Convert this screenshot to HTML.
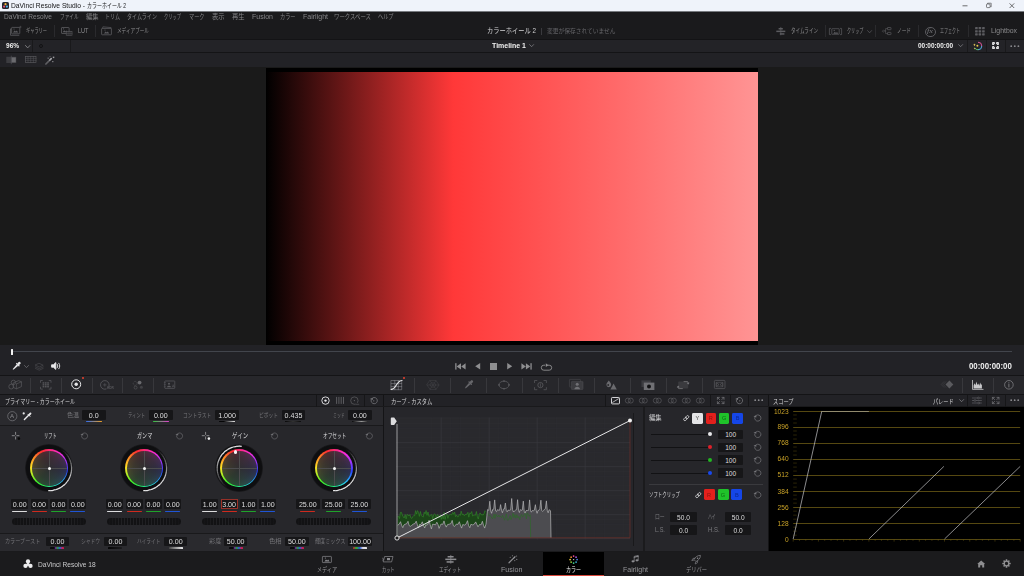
<!DOCTYPE html>
<html lang="ja"><head><meta charset="utf-8"><title>DaVinci Resolve Studio - カラーホイール 2</title>
<style>
html,body{margin:0;padding:0;}
body{width:1024px;height:576px;overflow:hidden;background:linear-gradient(#eff3fa 0,#eff3fa 11px,#1a1a1c 11px);font-family:"Liberation Sans","Noto Sans CJK JP",sans-serif;position:relative;}
#app{position:absolute;left:0;top:0;width:1024px;height:576px;overflow:hidden;filter:blur(.5px);}
#app div,#app svg,#app span{position:absolute;}
#app span{white-space:nowrap;line-height:20px;height:20px;transform-origin:0 50%;}
svg{overflow:visible}
</style></head>
<body><div id="app">
<div style="left:0px;top:0px;width:1024px;height:11px;background:#eff3fa;"></div>
<div style="left:0px;top:11px;width:1024px;height:1px;background:#777a7f;"></div>
<svg style="left:2.2px;top:2.2px;" width="7" height="7" viewBox="0 0 7 7"><rect x="0" y="0" width="7" height="7" rx="1.5" fill="#23272f"/><circle cx="3.5" cy="2.2" r="1.1" fill="#f5b43c"/><circle cx="2.1" cy="4.6" r="1.1" fill="#e9506e"/><circle cx="4.9" cy="4.6" r="1.1" fill="#4fb3e8"/></svg>
<span style="left:11.2px;top:-4.1px;font-size:6.6px;color:#121214;transform:scaleX(1.016);">DaVinci Resolve Studio -</span>
<span style="left:86.5px;top:-4.1px;font-size:6.6px;color:#121214;transform:scaleX(0.755);">カラーホイール 2</span>
<svg style="left:960.6px;top:2px;" width="60" height="8" viewBox="0 0 60 8"><path d="M1.5 3.8h5" stroke="#333" stroke-width=".7" fill="none"/><rect x="25.5" y="2" width="3.6" height="3.6" rx=".8" stroke="#333" stroke-width=".6" fill="none"/><path d="M26.6 2v-.8h3.6v3.6h-.9" stroke="#333" stroke-width=".55" fill="none"/><path d="M48.6 1.4l4.6 4.6M53.2 1.4l-4.6 4.6" stroke="#333" stroke-width=".7" fill="none"/></svg>
<div style="left:0px;top:12px;width:1024px;height:28px;background:#1a1a1c;"></div>
<span style="left:4px;top:6.8px;font-size:6.4px;color:#858588;transform:scaleX(1.026);">DaVinci Resolve</span>
<span style="left:59.5px;top:6.8px;font-size:6.4px;color:#858588;transform:scaleX(0.724);">ファイル</span>
<span style="left:85.5px;top:6.8px;font-size:6.4px;color:#858588;transform:scaleX(0.978);">編集</span>
<span style="left:105px;top:6.8px;font-size:6.4px;color:#858588;transform:scaleX(0.782);">トリム</span>
<span style="left:127px;top:6.8px;font-size:6.4px;color:#858588;transform:scaleX(0.791);">タイムライン</span>
<span style="left:164px;top:6.8px;font-size:6.4px;color:#858588;transform:scaleX(0.665);">クリップ</span>
<span style="left:188.5px;top:6.8px;font-size:6.4px;color:#858588;transform:scaleX(0.808);">マーク</span>
<span style="left:212px;top:6.8px;font-size:6.4px;color:#858588;transform:scaleX(0.978);">表示</span>
<span style="left:232px;top:6.8px;font-size:6.4px;color:#858588;transform:scaleX(0.978);">再生</span>
<span style="left:252px;top:6.8px;font-size:6.4px;color:#858588;transform:scaleX(1.094);">Fusion</span>
<span style="left:279.5px;top:6.8px;font-size:6.4px;color:#858588;transform:scaleX(0.808);">カラー</span>
<span style="left:302.5px;top:6.8px;font-size:6.4px;color:#858588;transform:scaleX(1.100);">Fairlight</span>
<span style="left:334px;top:6.8px;font-size:6.4px;color:#858588;transform:scaleX(0.845);">ワークスペース</span>
<span style="left:378px;top:6.8px;font-size:6.4px;color:#858588;transform:scaleX(0.808);">ヘルプ</span>
<span style="left:26px;top:21.4px;font-size:6.4px;color:#8c8c8e;transform:scaleX(0.657);">ギャラリー</span>
<span style="left:77.5px;top:21.4px;font-size:6.6px;color:#8c8c8e;transform:scaleX(0.842);">LUT</span>
<span style="left:117px;top:21.4px;font-size:6.4px;color:#8c8c8e;transform:scaleX(0.722);">メディアプール</span>
<div style="left:54px;top:25px;width:1px;height:12px;background:#2a2a2d;"></div>
<div style="left:94.5px;top:25px;width:1px;height:12px;background:#2a2a2d;"></div>
<span style="left:487px;top:21.2px;font-size:7.4px;color:#d2d2d4;transform:scaleX(0.846);">カラーホイール 2</span>
<div style="left:540.9px;top:28px;width:0.8px;height:7px;background:#3a3a3e;"></div>
<span style="left:546.5px;top:21.4px;font-size:6px;color:#646468;transform:scaleX(0.956);">変更が保存されていません</span>
<span style="left:791px;top:21.4px;font-size:6.4px;color:#8c8c8e;transform:scaleX(0.712);">タイムライン</span>
<span style="left:846.5px;top:21.4px;font-size:6.4px;color:#8c8c8e;transform:scaleX(0.645);">クリップ</span>
<span style="left:897px;top:21.4px;font-size:6.4px;color:#8c8c8e;transform:scaleX(0.730);">ノード</span>
<span style="left:940px;top:21.4px;font-size:6.4px;color:#8c8c8e;transform:scaleX(0.626);">エフェクト</span>
<span style="left:990.5px;top:21.4px;font-size:6.4px;color:#8c8c8e;transform:scaleX(1.076);">Lightbox</span>
<div style="left:824.5px;top:25px;width:1px;height:12px;background:#2a2a2d;"></div>
<div style="left:875px;top:25px;width:1px;height:12px;background:#2a2a2d;"></div>
<div style="left:917.5px;top:25px;width:1px;height:12px;background:#2a2a2d;"></div>
<div style="left:967.8px;top:25px;width:1px;height:12px;background:#2a2a2d;"></div>
<div style="left:0px;top:40px;width:1024px;height:12.2px;background:#232327;"></div>
<div style="left:0px;top:39.1px;width:1024px;height:1px;background:#131315;"></div>
<div style="left:0px;top:51.9px;width:1024px;height:1px;background:#141416;"></div>
<span style="left:6.2px;top:36.2px;font-size:7.4px;color:#f0f0f0;font-weight:700;transform:scaleX(0.885);">96%</span>
<div style="left:32px;top:40px;width:1.2px;height:12px;background:#19191b;"></div>
<div style="left:69.6px;top:40px;width:1.2px;height:12px;background:#19191b;"></div>
<div style="left:967.1px;top:40px;width:1.2px;height:12px;background:#19191b;"></div>
<div style="left:986px;top:40px;width:1.2px;height:12px;background:#19191b;"></div>
<div style="left:1005px;top:40px;width:1.2px;height:12px;background:#19191b;"></div>
<span style="left:491.5px;top:36.1px;font-size:7.2px;color:#f0f0f0;font-weight:700;transform:scaleX(0.971);">Timeline 1</span>
<span style="left:918.2px;top:36.1px;font-size:7.2px;color:#f0f0f0;font-weight:700;transform:scaleX(0.896);">00:00:00:00</span>
<div style="left:0px;top:52.6px;width:1024px;height:15px;background:#222226;"></div>
<div style="left:0px;top:67px;width:1024px;height:277.8px;background:#1a1a1a;"></div>
<div style="left:265.5px;top:67.5px;width:492.8px;height:277.2px;background:#000;"></div>
<div style="left:265.5px;top:72px;width:492.8px;height:268.6px;background:linear-gradient(90deg,#000 0%,#ff3838 38%,#ff9494 100%);"></div>
<div style="left:0px;top:344.8px;width:1024px;height:30.4px;background:#222226;"></div>
<div style="left:12px;top:351.3px;width:1000px;height:1px;background:#42454c;"></div>
<div style="left:11.4px;top:349.4px;width:1.3px;height:5.2px;background:#f2f2f2;border-radius:.5px"></div>
<span style="left:969px;top:357.4px;font-size:8.2px;color:#f0f0f0;font-weight:700;transform:scaleX(0.959);">00:00:00:00</span>
<div style="left:0px;top:375.2px;width:1024px;height:19.2px;background:#27272b;"></div>
<div style="left:0px;top:374.7px;width:1024px;height:1px;background:#141416;"></div>
<div style="left:0px;top:393.9px;width:1024px;height:1px;background:#141416;"></div>
<div style="left:0px;top:394.9px;width:1024px;height:12px;background:#222226;"></div>
<div style="left:0px;top:406.9px;width:383px;height:18.3px;background:#2a2a2e;"></div>
<div style="left:0px;top:425.7px;width:383px;height:107px;background:#27272b;"></div>
<div style="left:0px;top:533.4px;width:383px;height:17.4px;background:#2a2a2e;"></div>
<div style="left:384px;top:406.9px;width:384px;height:143.9px;background:#26262a;"></div>
<div style="left:768.4px;top:406.9px;width:255.6px;height:143.9px;background:#000;"></div>
<div style="left:382.9px;top:394.9px;width:1.2px;height:156.1px;background:#141416;"></div>
<div style="left:767.5px;top:394.9px;width:1px;height:156.1px;background:#141416;"></div>
<div style="left:0px;top:406.4px;width:1024px;height:0.8px;background:#19191b;"></div>
<div style="left:0px;top:424.9px;width:383px;height:1px;background:#19191b;"></div>
<div style="left:0px;top:532.6px;width:383px;height:1px;background:#19191b;"></div>
<div style="left:0px;top:551.6px;width:1024px;height:24.4px;background:#1b1b1d;"></div>
<svg style="left:10px;top:26px;" width="12" height="10" viewBox="0 0 12 10"><rect x="1.6" y="1.4" width="8.2" height="6.4" rx="0.6" stroke="#5c5c60" stroke-width="0.8" fill="none"/><path d="M.5 3v6.3h8.4" stroke="#5c5c60" stroke-width="0.8" fill="none" stroke-linecap="round" stroke-linejoin="round" /><path d="M3 6.4l1.6-2 1.2 1.2 1-1 1.4 1.8z" fill="#5c5c60"/><circle cx="4" cy="3.0" r=".6" fill="#5c5c60"/><path d="M10.4 .2v1.6M9.6 1h1.6" stroke="#5c5c60" stroke-width="0.5" fill="none" stroke-linecap="round" stroke-linejoin="round" /></svg>
<svg style="left:60.8px;top:26.6px;" width="12" height="9" viewBox="0 0 12 9"><rect x="0.5" y="0.5" width="7.6" height="6" rx="0.5" stroke="#5c5c60" stroke-width="0.8" fill="none"/><path d="M1.6 5.2l1.6-2 1.2 1.2 1-1 1.4 1.8z" fill="#5c5c60"/><circle cx="2.6" cy="1.8" r=".6" fill="#5c5c60"/><rect x="5.2" y="4.4" width="5.8" height="3.8" rx="0" stroke="#5c5c60" stroke-width="0.6" fill="#19191b"/><path d="M5.2 6.3h5.8M7.1 4.4v3.8M9 4.4v3.8" stroke="#5c5c60" stroke-width="0.5" fill="none" stroke-linecap="round" stroke-linejoin="round" /></svg>
<svg style="left:101.4px;top:26.4px;" width="12" height="10" viewBox="0 0 12 10"><path d="M1.6 2.2l.3-1.4 8.2 .8-.1.8" stroke="#5c5c60" stroke-width="0.7" fill="none" stroke-linecap="round" stroke-linejoin="round" /><rect x="0.6" y="2.4" width="9.8" height="6.4" rx="0.6" stroke="#5c5c60" stroke-width="0.8" fill="none"/><path d="M3 7.4l1.6-2 1.2 1.2 1-1 1.4 1.8z" fill="#5c5c60"/><circle cx="4" cy="4.0" r=".6" fill="#5c5c60"/></svg>
<svg style="left:776px;top:27px;" width="10" height="9" viewBox="0 0 10 9"><path d="M4.8 .3v7.6" stroke="#5c5c60" stroke-width="0.7" fill="none" stroke-linecap="round" stroke-linejoin="round" /><rect x="2.6" y="1" width="4.2" height="1.5" fill="#5c5c60"/><rect x=".3" y="3.6" width="9" height="1.5" fill="#5c5c60"/><rect x="3.8" y="6.2" width="4.6" height="1.5" fill="#5c5c60"/></svg>
<svg style="left:829px;top:27.6px;" width="13" height="7" viewBox="0 0 13 7"><path d="M1.6 .4h-1.2v6.2h1.2M11.4 .4h1.2v6.2h-1.2" stroke="#5c5c60" stroke-width="0.7" fill="none" stroke-linecap="round" stroke-linejoin="round" /><rect x="2.8" y="0.7" width="7.4" height="5.6" rx="0.3" stroke="#5c5c60" stroke-width="0.7" fill="none"/><path d="M4.2 5.800000000000001l1.6-2 1.2 1.2 1-1 1.4 1.8z" fill="#5c5c60"/><circle cx="5.2" cy="2.4" r=".6" fill="#5c5c60"/></svg>
<svg style="left:866.8px;top:29.6px;" width="6" height="4" viewBox="0 0 6 4"><path d="M.6 .6l2 2.2 2-2.2" stroke="#5c5c60" stroke-width="0.7" fill="none" stroke-linecap="round" stroke-linejoin="round" /></svg>
<svg style="left:882px;top:27px;" width="10" height="9" viewBox="0 0 10 9"><rect x="5.4" y="0.5" width="3.6" height="2.2" rx="0.4" stroke="#5c5c60" stroke-width="0.7" fill="none"/><rect x="5.4" y="5.4" width="3.6" height="2.2" rx="0.4" stroke="#5c5c60" stroke-width="0.7" fill="none"/><path d="M5.4 1.6h-1.8v5h1.8M3.6 4h-1.2" stroke="#5c5c60" stroke-width="0.6" fill="none" stroke-linecap="round" stroke-linejoin="round" /><path d="M.4 4l1-1 1 1-1 1z" stroke="#5c5c60" stroke-width="0.5" fill="none" stroke-linecap="round" stroke-linejoin="round" /></svg>
<div style="left:925.2px;top:26.5px;width:8.6px;height:8.6px;border:.8px solid #5c5c60;border-radius:50%"></div>
<span style="left:927px;top:21.2px;font-size:5.4px;color:#77777b;transform:scaleX(1.542);font-style:italic;font-family:'Liberation Serif',serif;">fx</span>
<svg style="left:974.6px;top:26.8px;" width="10" height="9" viewBox="0 0 10 9"><rect x="0.1" y="0.1" width="2.6" height="2.2" rx=".4" fill="#5c5c60"/><rect x="3.6" y="0.1" width="2.6" height="2.2" rx=".4" fill="#5c5c60"/><rect x="7.1" y="0.1" width="2.6" height="2.2" rx=".4" fill="#5c5c60"/><rect x="0.1" y="3.2" width="2.6" height="2.2" rx=".4" fill="#5c5c60"/><rect x="3.6" y="3.2" width="2.6" height="2.2" rx=".4" fill="#5c5c60"/><rect x="7.1" y="3.2" width="2.6" height="2.2" rx=".4" fill="#5c5c60"/><rect x="0.1" y="6.3" width="2.6" height="2.2" rx=".4" fill="#5c5c60"/><rect x="3.6" y="6.3" width="2.6" height="2.2" rx=".4" fill="#5c5c60"/><rect x="7.1" y="6.3" width="2.6" height="2.2" rx=".4" fill="#5c5c60"/></svg>
<svg style="left:24.8px;top:44.8px;" width="6" height="4" viewBox="0 0 6 4"><path d="M.5 .5l2.2 2.4 2.2-2.4" stroke="#8a8a8e" stroke-width="0.85" fill="none" stroke-linecap="round" stroke-linejoin="round" /></svg>
<div style="left:38.8px;top:44.3px;width:2.2px;height:2.2px;border:.6px solid #121214;border-radius:50%"></div>
<svg style="left:528.8px;top:44.2px;" width="6" height="4" viewBox="0 0 6 4"><path d="M.6 .6l2 2.1 2-2.1" stroke="#8a8a8e" stroke-width="0.7" fill="none" stroke-linecap="round" stroke-linejoin="round" /></svg>
<svg style="left:958.2px;top:44.2px;" width="6" height="4" viewBox="0 0 6 4"><path d="M.6 .6l2 2.1 2-2.1" stroke="#8a8a8e" stroke-width="0.7" fill="none" stroke-linecap="round" stroke-linejoin="round" /></svg>
<svg style="left:973px;top:41px;" width="10" height="10" viewBox="0 0 10 10"><path d="M5 1.2a3.8 3.8 0 0 1 3.8 3.8" stroke="#e0559a" stroke-width="1" fill="none"/><path d="M8.8 5a3.8 3.8 0 0 1-3.8 3.8" stroke="#57b2e6" stroke-width="1" fill="none"/><path d="M5 8.8a3.8 3.8 0 0 1-3.2-1.8" stroke="#5cc76a" stroke-width="1" fill="none"/><circle cx="4.4" cy="4.8" r="1" fill="#e8c64a"/><path d="M1.4 2.4l.5 1 .9.4-.9.4-.5 1-.4-1-.9-.4.9-.4z" fill="#f0d060"/><path d="M1.6 6.6l.3.6.6.3-.6.3-.3.6-.3-.6-.6-.3.6-.3z" fill="#f0d060"/></svg>
<svg style="left:992.2px;top:42.2px;" width="8" height="8" viewBox="0 0 8 8"><rect x="0.1" y="0.1" width="2.8" height="2.8" rx=".4" fill="#e4e4e6"/><rect x="0.1" y="4.1" width="2.8" height="2.8" rx=".4" fill="#e4e4e6"/><rect x="4.1" y="0.1" width="2.8" height="2.8" rx=".4" fill="#e4e4e6"/><rect x="4.1" y="4.1" width="2.8" height="2.8" rx=".4" fill="#e4e4e6"/><path d="M2.1 2.1l2.8 2.8M4.9 2.1l-2.8 2.8" stroke="#232327" stroke-width="0.8" fill="none" stroke-linecap="round" stroke-linejoin="round" /></svg>
<svg style="left:1009.6px;top:44.8px;" width="10" height="3" viewBox="0 0 10 3"><circle cx="1.2" cy="1.2" r=".9" fill="#8a8a8e"/><circle cx="4.8" cy="1.2" r=".9" fill="#8a8a8e"/><circle cx="8.4" cy="1.2" r=".9" fill="#8a8a8e"/></svg>
<svg style="left:6.2px;top:56px;" width="11" height="8" viewBox="0 0 11 8"><rect x=".3" y=".8" width="10" height="6.2" fill="#3c3c40"/><rect x="5.6" y="1.4" width="4.2" height="5" fill="#6a6a6e"/><path d="M5.3 0v7.8" stroke="#58585c" stroke-width="0.6" fill="none" stroke-linecap="round" stroke-linejoin="round" /></svg>
<svg style="left:25px;top:56.4px;" width="12" height="7" viewBox="0 0 12 7"><rect x="0.4" y="0.4" width="10.6" height="6" rx="0" stroke="#57575b" stroke-width="0.7" fill="none"/><path d="M.4 2.4h10.6M.4 4.4h10.6M3 .4v6M5.7 .4v6M8.4 .4v6" stroke="#57575b" stroke-width="0.5" fill="none" stroke-linecap="round" stroke-linejoin="round" /></svg>
<svg style="left:44.5px;top:55.6px;" width="10" height="9" viewBox="0 0 10 9"><path d="M.9 8l3.6-3.6" stroke="#5e5e62" stroke-width="1.7" fill="none" stroke-linecap="round" stroke-linejoin="round" /><path d="M4.9 4l1.3-1.3" stroke="#a4a4a8" stroke-width="1.7" fill="none" stroke-linecap="round" stroke-linejoin="round" /><rect x="7.8" y=".6" width="1.5" height="1.5" fill="#9a9a9e"/><rect x="7.2" y="5" width="1.2" height="1.2" fill="#8a8a8e"/><rect x="2.6" y="1.6" width="1.1" height="1.1" fill="#8a8a8e"/><rect x="4.6" y=".2" width=".9" height=".9" fill="#77777b"/></svg>
<svg style="left:11.6px;top:362.2px;" width="9" height="8.4" viewBox="0 0 9 8.4"><g transform="translate(4.4 4.1) rotate(45) scale(1.05)" fill="#e8e8ea"><rect x="-1.15" y="-5.2" width="2.3" height="3.2" rx=".9"/><rect x="-2.1" y="-2.5" width="4.2" height="1.1" rx=".3"/><path d="M-.95 -1.5h1.9l-.35 4.9-.6 1.7-.6-1.7z"/></g></svg>
<svg style="left:23.8px;top:365.2px;" width="6" height="4" viewBox="0 0 6 4"><path d="M.5 .5l2 2.1 2-2.1" stroke="#77777b" stroke-width="0.7" fill="none" stroke-linecap="round" stroke-linejoin="round" /></svg>
<svg style="left:34.8px;top:362.6px;" width="9" height="7.4" viewBox="0 0 9 7.4"><path d="M4.3 .4l3.9 1.8-3.9 1.8-3.9-1.8z" stroke="#47474b" stroke-width="0.7" fill="none" stroke-linecap="round" stroke-linejoin="round" /><path d="M.4 3.9l3.9 1.8 3.9-1.8M.4 5.4l3.9 1.8 3.9-1.8" stroke="#47474b" stroke-width="0.7" fill="none" stroke-linecap="round" stroke-linejoin="round" /></svg>
<svg style="left:51.2px;top:362.4px;" width="10" height="8" viewBox="0 0 10 8"><path d="M.6 2.8h1.8l2.4-2.2v6.8l-2.4-2.2h-1.8z" fill="#e8e8ea" stroke="#e8e8ea" stroke-width=".9" stroke-linejoin="round"/><path d="M6.2 2.2c.8 1 .8 2.6 0 3.6M7.8 1.2c1.3 1.6 1.3 4 0 5.6" stroke="#e8e8ea" stroke-width="0.9" fill="none" stroke-linecap="round" stroke-linejoin="round" /></svg>
<svg style="left:455px;top:362.9px;" width="11" height="6.8" viewBox="0 0 11 6.8"><rect x=".2" y=".2" width="1.3" height="6.4" fill="#8e8e90"/><path d="M6 .2v6.4l-4.4-3.2zM10.6 .2v6.4l-4.4-3.2z" fill="#8e8e90"/></svg>
<svg style="left:474.6px;top:363.1px;" width="6" height="6.4" viewBox="0 0 6 6.4"><path d="M5.2 0v6.4l-5-3.2z" fill="#8e8e90"/></svg>
<div style="left:489.8px;top:362.9px;width:6.8px;height:6.8px;background:#8e8e90;"></div>
<svg style="left:506.8px;top:363.1px;" width="6" height="6.4" viewBox="0 0 6 6.4"><path d="M.2 0v6.4l5-3.2z" fill="#8e8e90"/></svg>
<svg style="left:521.2px;top:362.9px;" width="11" height="6.8" viewBox="0 0 11 6.8"><rect x="9.4" y=".2" width="1.3" height="6.4" fill="#8e8e90"/><path d="M.4 .2v6.4l4.4-3.2zM4.9 .2v6.4l4.4-3.2z" fill="#8e8e90"/></svg>
<svg style="left:540.8px;top:362.7px;" width="12" height="8" viewBox="0 0 12 8"><path d="M3.8 2.2h-1a2.5 2.5 0 0 0 0 5h5.4a2.5 2.5 0 0 0 0-5h-1.4" stroke="#8e8e90" stroke-width="0.9" fill="none" stroke-linecap="round" stroke-linejoin="round" /><path d="M4.8 .3l2.6 1.9-2.6 1.9z" fill="#8e8e90"/></svg>
<div style="left:30.2px;top:377.6px;width:0.8px;height:15px;background:#38383c;"></div>
<div style="left:60.8px;top:377.6px;width:0.8px;height:15px;background:#38383c;"></div>
<div style="left:91.6px;top:377.6px;width:0.8px;height:15px;background:#38383c;"></div>
<div style="left:122.2px;top:377.6px;width:0.8px;height:15px;background:#38383c;"></div>
<div style="left:152.9px;top:377.6px;width:0.8px;height:15px;background:#38383c;"></div>
<div style="left:414.1px;top:377.6px;width:0.8px;height:15px;background:#38383c;"></div>
<div style="left:450.1px;top:377.6px;width:0.8px;height:15px;background:#38383c;"></div>
<div style="left:486.1px;top:377.6px;width:0.8px;height:15px;background:#38383c;"></div>
<div style="left:522.1px;top:377.6px;width:0.8px;height:15px;background:#38383c;"></div>
<div style="left:558.1px;top:377.6px;width:0.8px;height:15px;background:#38383c;"></div>
<div style="left:594.1px;top:377.6px;width:0.8px;height:15px;background:#38383c;"></div>
<div style="left:630.1px;top:377.6px;width:0.8px;height:15px;background:#38383c;"></div>
<div style="left:666.1px;top:377.6px;width:0.8px;height:15px;background:#38383c;"></div>
<div style="left:702.1px;top:377.6px;width:0.8px;height:15px;background:#38383c;"></div>
<div style="left:962.1px;top:377.6px;width:0.8px;height:15px;background:#38383c;"></div>
<div style="left:993.3px;top:377.6px;width:0.8px;height:15px;background:#38383c;"></div>
<svg style="left:8.2px;top:379.4px;" width="14" height="11" viewBox="0 0 14 11"><circle cx="3.2" cy="7.6" r="2.4" stroke="#5a5a5e" stroke-width="0.7" fill="none"/><circle cx="5.4" cy="3.4" r="2.2" stroke="#5a5a5e" stroke-width="0.7" fill="none"/><path d="M5.6 3.8l5-2.2 2.8 1.2v4.8l-5 2.2-2.8-1.2z" stroke="#5a5a5e" stroke-width="0.7" fill="none" stroke-linecap="round" stroke-linejoin="round" /><path d="M8.4 5v4.8M8.4 5l5-2.2" stroke="#5a5a5e" stroke-width="0.6" fill="none" stroke-linecap="round" stroke-linejoin="round" /></svg>
<svg style="left:40px;top:379.8px;" width="12" height="10" viewBox="0 0 12 10"><path d="M.5 2.4v-1.9h1.9M9.1 .5h1.9v1.9M11 7.2v1.9h-1.9M2.4 9.1h-1.9v-1.9" stroke="#5a5a5e" stroke-width="0.7" fill="none" stroke-linecap="round" stroke-linejoin="round" /><rect x="2.6" y="2.3" width="1.7" height="1.3" fill="#5a5a5e"/><rect x="4.9" y="2.3" width="1.7" height="1.3" fill="#5a5a5e"/><rect x="7.199999999999999" y="2.3" width="1.7" height="1.3" fill="#5a5a5e"/><rect x="2.6" y="4.199999999999999" width="1.7" height="1.3" fill="#5a5a5e"/><rect x="4.9" y="4.199999999999999" width="1.7" height="1.3" fill="#5a5a5e"/><rect x="7.199999999999999" y="4.199999999999999" width="1.7" height="1.3" fill="#5a5a5e"/><rect x="2.6" y="6.1" width="1.7" height="1.3" fill="#5a5a5e"/><rect x="4.9" y="6.1" width="1.7" height="1.3" fill="#5a5a5e"/><rect x="7.199999999999999" y="6.1" width="1.7" height="1.3" fill="#5a5a5e"/></svg>
<svg style="left:70.8px;top:379.2px;" width="12" height="11" viewBox="0 0 12 11"><circle cx="5.2" cy="5.3" r="4.5" stroke="#e8e8ea" stroke-width="1" fill="none"/><circle cx="5.2" cy="5.3" r="1.7" fill="#e8e8ea"/></svg>
<div style="left:82.1px;top:377.2px;width:1.9px;height:1.9px;border-radius:50%;background:#e8412f"></div>
<svg style="left:100px;top:379.6px;" width="15" height="11" viewBox="0 0 15 11"><circle cx="4.8" cy="4.9" r="4.3" stroke="#5a5a5e" stroke-width="0.8" fill="none"/><path d="M4.8 3.6v2.6M3.5 4.9h2.6" stroke="#5a5a5e" stroke-width="0.6" fill="none" stroke-linecap="round" stroke-linejoin="round" /><rect x="6.6" y="6.6" width="7.4" height="3.6" fill="#27272b"/></svg>
<span style="left:106.8px;top:378px;font-size:3.6px;color:#5a5a5e;font-weight:700;transform:scaleX(0.872);">HDR</span>
<svg style="left:132.4px;top:379.6px;" width="12" height="10" viewBox="0 0 12 10"><circle cx="3.2" cy="3.4" r="2" stroke="#5a5a5e" stroke-width=".6" fill="none" stroke-dasharray="1 .7"/><circle cx="3.6" cy="7.6" r="1.5" stroke="#5a5a5e" stroke-width="0.6" fill="none"/><circle cx="7.6" cy="2.6" r="1.9" fill="#6a6a6e"/><circle cx="9.4" cy="7.2" r="1.5" fill="#414145"/></svg>
<svg style="left:163.6px;top:380px;" width="12" height="9.4" viewBox="0 0 12 9.4"><rect x="0.8" y="1" width="10" height="7.4" rx="0.5" stroke="#5a5a5e" stroke-width="0.7" fill="none"/><path d="M.2 2.4h1.2M.2 4.6h1.2M.2 6.8h1.2" stroke="#5a5a5e" stroke-width="0.5" fill="none" stroke-linecap="round" stroke-linejoin="round" /><circle cx="5" cy="3.8" r="1" fill="#5a5a5e"/><path d="M3 7.2c0-2 4-2 4 0z" fill="#5a5a5e"/><path d="M8.2 7.2l1-2.6 1 2.6M8.5 6.4h1.4" stroke="#5a5a5e" stroke-width="0.45" fill="none" stroke-linecap="round" stroke-linejoin="round" /></svg>
<svg style="left:391px;top:379.6px;" width="12" height="10.4" viewBox="0 0 12 10.4"><path d="M.3 .5h10.4v9.2h-10.4zM.3 3.6h10.4M.3 6.6h10.4M3.8 .5v9.2M7.3 .5v9.2" stroke="#8e8e92" stroke-width="0.55" fill="none" stroke-linecap="round" stroke-linejoin="round" /><path d="M.2 9.4c5 0 5-8.6 10.8-8.9" stroke="#e8e8ea" stroke-width="1.2" fill="none" stroke-linecap="round" stroke-linejoin="round" /></svg>
<div style="left:402.8px;top:377px;width:1.9px;height:1.9px;border-radius:50%;background:#e8412f"></div>
<svg style="left:426.6px;top:379.8px;" width="12" height="10" viewBox="0 0 12 10"><path d="M3 .6h6l3 4.4-3 4.4h-6l-3-4.4zM0 5h12M3 .6l6 8.8M9 .6l-6 8.8M4.6 2.8h2.8l1.4 2.2-1.4 2.2h-2.8l-1.4-2.2z" stroke="#47474b" stroke-width="0.45" fill="none" stroke-linecap="round" stroke-linejoin="round" /></svg>
<svg style="left:463.8px;top:380px;" width="10" height="9.4" viewBox="0 0 10 9.4"><g transform="translate(4.7 4.6) rotate(45) scale(1.08)" fill="#66666a"><rect x="-1.15" y="-5.2" width="2.3" height="3.2" rx=".9"/><rect x="-2.1" y="-2.5" width="4.2" height="1.1" rx=".3"/><path d="M-.95 -1.5h1.9l-.35 4.9-.6 1.7-.6-1.7z"/></g></svg>
<svg style="left:498.2px;top:380px;" width="12" height="10" viewBox="0 0 12 10"><ellipse cx="6" cy="4.9" rx="5" ry="3.8" stroke="#5a5a5e" stroke-width=".8" fill="none"/><rect x="5.25" y="0.35" width="1.5" height="1.5" fill="#5a5a5e"/><rect x="5.25" y="7.95" width="1.5" height="1.5" fill="#5a5a5e"/><rect x="0.25" y="4.15" width="1.5" height="1.5" fill="#5a5a5e"/><rect x="10.25" y="4.15" width="1.5" height="1.5" fill="#5a5a5e"/></svg>
<svg style="left:534.4px;top:379.6px;" width="13" height="10.4" viewBox="0 0 13 10.4"><path d="M.5 2.6v-2.1h2.4M10 .5h2.4v2.1M12.4 7.6v2.1h-2.4M2.9 9.7h-2.4v-2.1" stroke="#5a5a5e" stroke-width="0.7" fill="none" stroke-linecap="round" stroke-linejoin="round" /><circle cx="6.4" cy="5.1" r="2.6" stroke="#5a5a5e" stroke-width="0.8" fill="none"/><path d="M6.4 3.8v2.6" stroke="#5a5a5e" stroke-width="0.7" fill="none" stroke-linecap="round" stroke-linejoin="round" /></svg>
<svg style="left:569px;top:379.4px;" width="15" height="11" viewBox="0 0 15 11"><rect x="0.4" y="0.4" width="11" height="7.6" rx="0.4" stroke="#48484c" stroke-width="0.6" fill="none"/><rect x="2.4" y="2.4" width="11.6" height="8" rx=".5" fill="#3c3c40" stroke="#505054" stroke-width=".5"/><circle cx="8.2" cy="5.2" r="1.5" fill="#707074"/><path d="M5.4 10.2c0-3.4 5.6-3.4 5.6 0z" fill="#707074"/></svg>
<svg style="left:606.4px;top:380px;" width="11" height="10" viewBox="0 0 11 10"><path d="M2.8 .6c1.4 1.8 2.4 2.8 2.4 4.2a2.4 2.4 0 0 1-4.8 0c0-1.4 1-2.4 2.4-4.2z" fill="#6a6a6e"/><circle cx="2.2" cy="5" r=".9" fill="#27272b"/><path d="M7.6 3.6l3.2 6h-6.4z" fill="#6a6a6e"/></svg>
<svg style="left:640.6px;top:379.6px;" width="14" height="10.4" viewBox="0 0 14 10.4"><rect x=".4" y=".4" width="9.4" height="6.6" fill="#3c3c40"/><rect x="2.8" y="2.6" width="10.6" height="7.4" fill="#707074"/><circle cx="8" cy="6.4" r="2" fill="#121214"/></svg>
<svg style="left:677.4px;top:379.8px;" width="13" height="10" viewBox="0 0 13 10"><rect x="1.2" y="1.6" width="10" height="7" rx=".8" fill="#3a3a3e"/><path d="M7 1.6h3.2a1 1 0 0 1 1 1v1.2" stroke="#77777b" stroke-width="0.8" fill="none" stroke-linecap="round" stroke-linejoin="round" /><path d="M9.8 2.8l1.4 1.8 1.4-1.8z" fill="#77777b"/><path d="M5.4 8.6h-3.2a1 1 0 0 1-1-1v-1.2" stroke="#77777b" stroke-width="0.8" fill="none" stroke-linecap="round" stroke-linejoin="round" /><path d="M-.2 7.4l1.4-1.8 1.4 1.8z" fill="#77777b"/></svg>
<svg style="left:713.8px;top:380.2px;" width="12" height="9.4" viewBox="0 0 12 9.4"><rect x="0.4" y="0.4" width="10.6" height="8.2" rx="1" stroke="#5a5a5e" stroke-width="0.7" fill="none"/><path d="M2.6 2.8l2.4 1.8-2.4 1.8zM8.4 2.8l-2.4 1.8 2.4 1.8z" stroke="#5a5a5e" stroke-width="0.6" fill="none" stroke-linecap="round" stroke-linejoin="round" /><rect x="2.2" y="2.4" width="6.6" height="4.4" rx="0.3" stroke="#5a5a5e" stroke-width="0.5" fill="none"/></svg>
<svg style="left:941px;top:380.2px;" width="13" height="9" viewBox="0 0 13 9"><path d="M3.2 1.4l-3 3.1 3 3.1M5.2 1.4l-3 3.1 3 3.1" stroke="#3e3e42" stroke-width=".7" fill="none"/><path d="M8.4 .6l3.9 3.9-3.9 3.9-3.9-3.9z" fill="#5a5a5e"/></svg>
<svg style="left:972.4px;top:379.6px;" width="12" height="10" viewBox="0 0 12 10"><path d="M.5 .4v9h10.6" stroke="#c8c8ca" stroke-width="0.8" fill="none" stroke-linecap="round" stroke-linejoin="round" /><path d="M1.6 8.6v-3l1-2.4.9 2 .9-3.6 1 3.4.9-1.6 1 2.4.9-3.2.9 2.4.8-1v4.6z" fill="#c8c8ca"/></svg>
<svg style="left:1003.6px;top:379.8px;" width="10" height="10" viewBox="0 0 10 10"><circle cx="4.9" cy="4.8" r="4.3" stroke="#8a8a8e" stroke-width="0.7" fill="none"/><path d="M4.9 4.2v2.8" stroke="#8a8a8e" stroke-width="0.8" fill="none" stroke-linecap="round" stroke-linejoin="round" /><circle cx="4.9" cy="2.7" r=".5" fill="#8a8a8e"/></svg>
<span style="left:4.6px;top:391.8px;font-size:6.4px;color:#d4d4d6;transform:scaleX(0.789);">プライマリー - カラーホイール</span>
<span style="left:391px;top:391.8px;font-size:6.4px;color:#d4d4d6;transform:scaleX(0.827);">カーブ - カスタム</span>
<span style="left:772.6px;top:391.8px;font-size:6.4px;color:#d4d4d6;transform:scaleX(0.818);">スコープ</span>
<span style="left:933px;top:391.8px;font-size:6.4px;color:#d4d4d6;transform:scaleX(0.806);">パレード</span>
<div style="left:316.1px;top:395.2px;width:1px;height:11.4px;background:#161618;"></div>
<div style="left:363.5px;top:395.2px;width:1px;height:11.4px;background:#161618;"></div>
<div style="left:605.3px;top:395.2px;width:1px;height:11.4px;background:#161618;"></div>
<div style="left:710.1px;top:395.2px;width:1px;height:11.4px;background:#161618;"></div>
<div style="left:729.5px;top:395.2px;width:1px;height:11.4px;background:#161618;"></div>
<div style="left:747.5px;top:395.2px;width:1px;height:11.4px;background:#161618;"></div>
<div style="left:967px;top:395.2px;width:1px;height:11.4px;background:#161618;"></div>
<div style="left:986px;top:395.2px;width:1px;height:11.4px;background:#161618;"></div>
<div style="left:1005px;top:395.2px;width:1px;height:11.4px;background:#161618;"></div>
<svg style="left:321.4px;top:396px;" width="9" height="9" viewBox="0 0 9 9"><circle cx="4.5" cy="4.6" r="3.7" stroke="#e8e8ea" stroke-width="0.9" fill="none"/><circle cx="4.5" cy="4.6" r="1.2" fill="#e8e8ea"/></svg>
<svg style="left:336.4px;top:397.2px;" width="8" height="7" viewBox="0 0 8 7"><path d="M.6 .3v6.2M2.9 .3v6.2M5.2 .3v6.2M7.5 .3v6.2" stroke="#6a6a6e" stroke-width="0.8" fill="none" stroke-linecap="round" stroke-linejoin="round" /></svg>
<svg style="left:349.8px;top:396px;" width="10" height="9" viewBox="0 0 10 9"><circle cx="4.4" cy="4.6" r="3.7" stroke="#5e5e62" stroke-width="0.7" fill="none"/><circle cx="4.4" cy="4.6" r=".7" fill="#5e5e62"/><rect x="5.4" y="6.8" width="4" height="2" fill="#222226"/><path d="M5.8 8.3h3" stroke="#5e5e62" stroke-width="0.6" fill="none" stroke-linecap="round" stroke-linejoin="round" /></svg>
<svg style="left:0px;top:0px;" width="1" height="1" viewBox="0 0 1 1"><path d="M372.65 397.92A3.1 3.1 0 1 1 371.22 399.75" stroke="#808084" stroke-width="0.7" fill="none"/><path d="M372.80 397.72L369.88 399.03L372.70 400.05z" fill="#808084"/></svg>
<svg style="left:373.4px;top:399.8px;" width="2" height="2" viewBox="0 0 2 2"><circle cx=".8" cy=".8" r=".6" fill="#808084"/></svg>
<svg style="left:610.6px;top:396.8px;" width="9.4" height="7.6" viewBox="0 0 9.4 7.6"><rect x="0.5" y="0.5" width="8" height="6.4" rx="0.8" stroke="#e8e8ea" stroke-width="0.9" fill="none"/><path d="M1.6 5.4l5.8-3.6" stroke="#e8e8ea" stroke-width="0.7" fill="none" stroke-linecap="round" stroke-linejoin="round" /></svg>
<svg style="left:624.7px;top:397px;" width="9" height="7.4" viewBox="0 0 9 7.4"><circle cx="2.8" cy="3.6" r="2.5" stroke="#5a5a5e" stroke-width="0.7" fill="none"/><circle cx="5.8" cy="3.6" r="2.5" stroke="#5a5a5e" stroke-width="0.7" fill="none"/></svg>
<svg style="left:638.7px;top:397px;" width="9" height="7.4" viewBox="0 0 9 7.4"><circle cx="2.8" cy="3.6" r="2.5" stroke="#5a5a5e" stroke-width="0.7" fill="none"/><circle cx="5.8" cy="3.6" r="2.5" stroke="#5a5a5e" stroke-width="0.7" fill="none"/></svg>
<svg style="left:653.2px;top:397px;" width="9" height="7.4" viewBox="0 0 9 7.4"><circle cx="2.8" cy="3.6" r="2.5" stroke="#5a5a5e" stroke-width="0.7" fill="none"/><circle cx="5.8" cy="3.6" r="2.5" stroke="#5a5a5e" stroke-width="0.7" fill="none"/></svg>
<svg style="left:667.7px;top:397px;" width="9" height="7.4" viewBox="0 0 9 7.4"><circle cx="2.8" cy="3.6" r="2.5" stroke="#5a5a5e" stroke-width="0.7" fill="none"/><circle cx="5.8" cy="3.6" r="2.5" stroke="#5a5a5e" stroke-width="0.7" fill="none"/></svg>
<svg style="left:681.7px;top:397px;" width="9" height="7.4" viewBox="0 0 9 7.4"><circle cx="2.8" cy="3.6" r="2.5" stroke="#5a5a5e" stroke-width="0.7" fill="none"/><circle cx="5.8" cy="3.6" r="2.5" stroke="#5a5a5e" stroke-width="0.7" fill="none"/></svg>
<svg style="left:696.4px;top:397px;" width="9" height="7.4" viewBox="0 0 9 7.4"><circle cx="2.8" cy="3.6" r="2.5" stroke="#5a5a5e" stroke-width="0.7" fill="none"/><circle cx="5.8" cy="3.6" r="2.5" stroke="#5a5a5e" stroke-width="0.7" fill="none"/></svg>
<svg style="left:717px;top:397.2px;" width="8" height="7" viewBox="0 0 8 7"><path d="M.4 2.4v-2h2M.6 .6l2 2" stroke="#77777b" stroke-width="0.7" fill="none" stroke-linecap="round" stroke-linejoin="round" /><path d="M5 .4h2v2M6.8 .6l-2 2" stroke="#77777b" stroke-width="0.7" fill="none" stroke-linecap="round" stroke-linejoin="round" /><path d="M7 4.6v2h-2M6.8 6.4l-2-2" stroke="#77777b" stroke-width="0.7" fill="none" stroke-linecap="round" stroke-linejoin="round" /><path d="M2.4 6.6h-2v-2M.6 6.4l2-2" stroke="#77777b" stroke-width="0.7" fill="none" stroke-linecap="round" stroke-linejoin="round" /></svg>
<svg style="left:0px;top:0px;" width="1" height="1" viewBox="0 0 1 1"><path d="M737.95 397.92A3.1 3.1 0 1 1 736.52 399.75" stroke="#808084" stroke-width="0.7" fill="none"/><path d="M738.10 397.72L735.18 399.03L738.00 400.05z" fill="#808084"/></svg>
<svg style="left:738.7px;top:399.8px;" width="2" height="2" viewBox="0 0 2 2"><circle cx=".8" cy=".8" r=".6" fill="#808084"/></svg>
<svg style="left:754px;top:399.4px;" width="10" height="3" viewBox="0 0 10 3"><circle cx="1.2" cy="1.2" r=".9" fill="#8a8a8e"/><circle cx="4.7" cy="1.2" r=".9" fill="#8a8a8e"/><circle cx="8.2" cy="1.2" r=".9" fill="#8a8a8e"/></svg>
<svg style="left:958.6px;top:399px;" width="6" height="4" viewBox="0 0 6 4"><path d="M.6 .6l2 2.1 2-2.1" stroke="#8a8a8e" stroke-width="0.7" fill="none" stroke-linecap="round" stroke-linejoin="round" /></svg>
<svg style="left:971.6px;top:397.2px;" width="10" height="7" viewBox="0 0 10 7"><path d="M.4 1h9M.4 3.5h9M.4 6h9" stroke="#6a6a6e" stroke-width="0.6" fill="none" stroke-linecap="round" stroke-linejoin="round" /><circle cx="6.4" cy="1" r=".9" fill="#222226" stroke="#6a6a6e" stroke-width=".5"/><circle cx="3" cy="3.5" r=".9" fill="#222226" stroke="#6a6a6e" stroke-width=".5"/><circle cx="6.8" cy="6" r=".9" fill="#222226" stroke="#6a6a6e" stroke-width=".5"/></svg>
<svg style="left:992.4px;top:397.2px;" width="8" height="7" viewBox="0 0 8 7"><path d="M.4 2.4v-2h2M.6 .6l2 2" stroke="#77777b" stroke-width="0.7" fill="none" stroke-linecap="round" stroke-linejoin="round" /><path d="M5 .4h2v2M6.8 .6l-2 2" stroke="#77777b" stroke-width="0.7" fill="none" stroke-linecap="round" stroke-linejoin="round" /><path d="M7 4.6v2h-2M6.8 6.4l-2-2" stroke="#77777b" stroke-width="0.7" fill="none" stroke-linecap="round" stroke-linejoin="round" /><path d="M2.4 6.6h-2v-2M.6 6.4l2-2" stroke="#77777b" stroke-width="0.7" fill="none" stroke-linecap="round" stroke-linejoin="round" /></svg>
<svg style="left:1010px;top:399.4px;" width="10" height="3" viewBox="0 0 10 3"><circle cx="1.2" cy="1.2" r=".9" fill="#8a8a8e"/><circle cx="4.7" cy="1.2" r=".9" fill="#8a8a8e"/><circle cx="8.2" cy="1.2" r=".9" fill="#8a8a8e"/></svg>
<span style="left:67px;top:405.1px;font-size:6.2px;color:#737377;transform:scaleX(0.970);">色温</span>
<div style="left:82px;top:410.3px;width:23.6px;height:9.3px;background:#161618;border-radius:1px;"></div>
<span style="left:82px;width:23.6px;top:406.3px;text-align:center;font-size:7.1px;color:#dededf">0.0</span>
<div style="left:85.6px;top:420.75px;width:16px;height:1.3px;background:linear-gradient(90deg,#2d6cf0,#f0a020);border-radius:.6px"></div>
<span style="left:127.8px;top:405.1px;font-size:6.2px;color:#737377;transform:scaleX(0.705);">ティント</span>
<div style="left:149px;top:410.3px;width:23.6px;height:9.3px;background:#161618;border-radius:1px;"></div>
<span style="left:149px;width:23.6px;top:406.3px;text-align:center;font-size:7.1px;color:#dededf">0.00</span>
<div style="left:152.6px;top:420.75px;width:16px;height:1.3px;background:linear-gradient(90deg,#2ec83a,#e63ad2);border-radius:.6px"></div>
<span style="left:182.6px;top:405.1px;font-size:6.2px;color:#737377;transform:scaleX(0.762);">コントラスト</span>
<div style="left:215.3px;top:410.3px;width:23.6px;height:9.3px;background:#161618;border-radius:1px;"></div>
<span style="left:215.3px;width:23.6px;top:406.3px;text-align:center;font-size:7.1px;color:#dededf">1.000</span>
<div style="left:218.9px;top:420.75px;width:16px;height:1.3px;background:linear-gradient(90deg,#050506 30%,#f0f0f0);border-radius:.6px"></div>
<span style="left:259.4px;top:405.1px;font-size:6.2px;color:#737377;transform:scaleX(0.764);">ピボット</span>
<div style="left:281.7px;top:410.3px;width:23.6px;height:9.3px;background:#161618;border-radius:1px;"></div>
<span style="left:281.7px;width:23.6px;top:406.3px;text-align:center;font-size:7.1px;color:#dededf">0.435</span>
<div style="left:285.3px;top:420.75px;width:16px;height:1.3px;background:linear-gradient(90deg,#050506,#333 50%,#0a0a0a);border-radius:.6px"></div>
<span style="left:333.2px;top:405.1px;font-size:6.2px;color:#737377;transform:scaleX(0.636);">ミッド</span>
<div style="left:348.1px;top:410.3px;width:23.6px;height:9.3px;background:#161618;border-radius:1px;"></div>
<span style="left:348.1px;width:23.6px;top:406.3px;text-align:center;font-size:7.1px;color:#dededf">0.00</span>
<div style="left:351.7px;top:420.75px;width:16px;height:1.3px;background:linear-gradient(90deg,#050506,#999 60%,#222);border-radius:.6px"></div>
<svg style="left:6.6px;top:410.6px;" width="11" height="11" viewBox="0 0 11 11"><circle cx="5.3" cy="5.2" r="4.6" stroke="#7a7a7e" stroke-width="0.7" fill="none"/></svg>
<span style="left:9.9px;top:405.9px;font-size:5.4px;color:#8a8a8e;transform:scaleX(1.136);">A</span>
<svg style="left:21.6px;top:410.6px;" width="10" height="9.6" viewBox="0 0 10 9.6"><path d="M2.4 8.6l4-4" stroke="#e8e8ea" stroke-width="1.4" fill="none" stroke-linecap="round" stroke-linejoin="round" /><path d="M6 3.4l2 2" stroke="#e8e8ea" stroke-width="0.9" fill="none" stroke-linecap="round" stroke-linejoin="round" /><path d="M7 4l1.5-1.5" stroke="#e8e8ea" stroke-width="1.8" fill="none" stroke-linecap="round" stroke-linejoin="round" /><circle cx="1.7" cy="2.4" r="1.1" fill="#e8e8ea"/></svg>
<div style="left:25.4px;top:444.4px;width:48px;height:48px;border-radius:50%;background:radial-gradient(circle,#0e0e10 0 22.6px,#141416 23.2px,#1c1c1f 24px)"></div>
<div style="left:30.3px;top:449.3px;width:38.2px;height:38.2px;border-radius:50%;background:conic-gradient(from 0deg,#ff2a75 0deg,#ff2ae0 38deg,#9a35ff 72deg,#2c45ff 100deg,#25b8ff 135deg,#25f0d0 160deg,#25f060 192deg,#40f025 222deg,#b8f025 250deg,#ffdc25 275deg,#ff8a25 305deg,#ff2a30 338deg,#ff2a75 360deg)"></div>
<div style="left:32.1px;top:451.1px;width:34.6px;height:34.6px;border-radius:50%;background:radial-gradient(circle,rgba(46,46,49,1) 0,rgba(44,44,47,.92) 45%,rgba(40,40,44,.72) 100%),conic-gradient(from 0deg,#ff2a75 0deg,#ff2ae0 38deg,#9a35ff 72deg,#2c45ff 100deg,#25b8ff 135deg,#25f0d0 160deg,#25f060 192deg,#40f025 222deg,#b8f025 250deg,#ffdc25 275deg,#ff8a25 305deg,#ff2a30 338deg,#ff2a75 360deg)"></div>
<div style="left:32.2px;top:468.1px;width:34.4px;height:0.6px;background:#4c4c4e;"></div>
<div style="left:49.1px;top:451.2px;width:0.6px;height:34.4px;background:#4c4c4e;"></div>
<svg style="left:0px;top:0px;" width="1" height="1" viewBox="0 0 1 1"><path d="M50.89 490.55A22.2 22.2 0 0 1 48.24 490.57" stroke="#e4e4e6" stroke-opacity="1.00" stroke-width="1.25" fill="none"/><path d="M53.29 490.26A22.2 22.2 0 0 1 50.66 490.56" stroke="#e4e4e6" stroke-opacity="1.00" stroke-width="1.25" fill="none"/><path d="M55.65 489.70A22.2 22.2 0 0 1 53.06 490.30" stroke="#e4e4e6" stroke-opacity="1.00" stroke-width="1.25" fill="none"/><path d="M57.93 488.90A22.2 22.2 0 0 1 55.43 489.77" stroke="#e4e4e6" stroke-opacity="1.00" stroke-width="1.25" fill="none"/><path d="M60.11 487.84A22.2 22.2 0 0 1 57.72 488.98" stroke="#e4e4e6" stroke-opacity="1.00" stroke-width="1.25" fill="none"/><path d="M62.17 486.56A22.2 22.2 0 0 1 59.91 487.96" stroke="#e4e4e6" stroke-opacity="1.00" stroke-width="1.25" fill="none"/><path d="M64.07 485.07A22.2 22.2 0 0 1 61.97 486.70" stroke="#e4e4e6" stroke-opacity="1.00" stroke-width="1.25" fill="none"/><path d="M65.79 483.37A22.2 22.2 0 0 1 63.89 485.22" stroke="#e4e4e6" stroke-opacity="1.00" stroke-width="1.25" fill="none"/><path d="M67.33 481.50A22.2 22.2 0 0 1 65.64 483.54" stroke="#e4e4e6" stroke-opacity="1.00" stroke-width="1.25" fill="none"/><path d="M68.65 479.47A22.2 22.2 0 0 1 67.19 481.68" stroke="#e4e4e6" stroke-opacity="0.96" stroke-width="1.25" fill="none"/><path d="M69.74 477.31A22.2 22.2 0 0 1 68.53 479.67" stroke="#e4e4e6" stroke-opacity="0.89" stroke-width="1.25" fill="none"/><path d="M70.58 475.04A22.2 22.2 0 0 1 69.64 477.52" stroke="#e4e4e6" stroke-opacity="0.81" stroke-width="1.25" fill="none"/><path d="M71.18 472.69A22.2 22.2 0 0 1 70.51 475.26" stroke="#e4e4e6" stroke-opacity="0.74" stroke-width="1.25" fill="none"/><path d="M71.52 470.30A22.2 22.2 0 0 1 71.13 472.92" stroke="#e4e4e6" stroke-opacity="0.66" stroke-width="1.25" fill="none"/><path d="M71.59 467.88A22.2 22.2 0 0 1 71.50 470.53" stroke="#e4e4e6" stroke-opacity="0.59" stroke-width="1.25" fill="none"/><path d="M71.40 465.46A22.2 22.2 0 0 1 71.60 468.11" stroke="#e4e4e6" stroke-opacity="0.52" stroke-width="1.25" fill="none"/><path d="M70.95 463.09A22.2 22.2 0 0 1 71.43 465.69" stroke="#e4e4e6" stroke-opacity="0.45" stroke-width="1.25" fill="none"/><path d="M70.25 460.77A22.2 22.2 0 0 1 71.01 463.31" stroke="#e4e4e6" stroke-opacity="0.39" stroke-width="1.25" fill="none"/><path d="M69.29 458.55A22.2 22.2 0 0 1 70.33 460.99" stroke="#e4e4e6" stroke-opacity="0.32" stroke-width="1.25" fill="none"/><path d="M68.10 456.44A22.2 22.2 0 0 1 69.40 458.76" stroke="#e4e4e6" stroke-opacity="0.26" stroke-width="1.25" fill="none"/><path d="M66.69 454.47A22.2 22.2 0 0 1 68.23 456.64" stroke="#e4e4e6" stroke-opacity="0.20" stroke-width="1.25" fill="none"/><path d="M65.07 452.67A22.2 22.2 0 0 1 66.83 454.66" stroke="#e4e4e6" stroke-opacity="0.14" stroke-width="1.25" fill="none"/><path d="M63.27 451.06A22.2 22.2 0 0 1 65.23 452.84" stroke="#e4e4e6" stroke-opacity="0.09" stroke-width="1.25" fill="none"/><path d="M61.30 449.66A22.2 22.2 0 0 1 63.45 451.21" stroke="#e4e4e6" stroke-opacity="0.04" stroke-width="1.25" fill="none"/></svg>
<div style="left:47.8px;top:466.8px;width:3.2px;height:3.2px;border-radius:50%;background:#f4f4f4"></div>
<span style="left:44.3px;top:426.4px;font-size:7px;color:#dcdcde;transform:scaleX(0.600);">リフト</span>
<svg style="left:12.4px;top:432px;" width="9" height="9" viewBox="0 0 9 9"><path d="M3.6 .3v2.2M3.6 4.9v2.2M.2 3.7h2.2M4.8 3.7h2.2" stroke="#c8c8ca" stroke-width="0.6" fill="none" stroke-linecap="round" stroke-linejoin="round" /><circle cx="6.9" cy="6.6" r="1.3" fill="#0a0a0a"/></svg>
<svg style="left:0px;top:0px;" width="1" height="1" viewBox="0 0 1 1"><path d="M83.10 433.40A3 3 0 1 1 81.72 435.17" stroke="#707074" stroke-width="0.65" fill="none"/><path d="M83.24 433.21L80.37 434.46L83.19 435.49z" fill="#707074"/></svg>
<div style="left:11.2px;top:499.3px;width:17.15px;height:9.6px;background:#161618;border-radius:1px;"></div>
<span style="left:11.2px;width:17.15px;top:495px;text-align:center;font-size:7.1px;color:#dededf">0.00</span>
<div style="left:12.175px;top:511.15px;width:15.2px;height:1.3px;background:#dcdcde;border-radius:.6px"></div>
<div style="left:30.55px;top:499.3px;width:17.15px;height:9.6px;background:#161618;border-radius:1px;"></div>
<span style="left:30.55px;width:17.15px;top:495px;text-align:center;font-size:7.1px;color:#dededf">0.00</span>
<div style="left:31.525px;top:511.15px;width:15.2px;height:1.3px;background:#cf2a1e;border-radius:.6px"></div>
<div style="left:49.9px;top:499.3px;width:17.15px;height:9.6px;background:#161618;border-radius:1px;"></div>
<span style="left:49.9px;width:17.15px;top:495px;text-align:center;font-size:7.1px;color:#dededf">0.00</span>
<div style="left:50.875px;top:511.15px;width:15.2px;height:1.3px;background:#1fa32a;border-radius:.6px"></div>
<div style="left:69.25px;top:499.3px;width:17.15px;height:9.6px;background:#161618;border-radius:1px;"></div>
<span style="left:69.25px;width:17.15px;top:495px;text-align:center;font-size:7.1px;color:#dededf">0.00</span>
<div style="left:70.225px;top:511.15px;width:15.2px;height:1.3px;background:#1f55d6;border-radius:.6px"></div>
<div style="left:11.6px;top:518.2px;width:74.6px;height:7px;border-radius:3.5px;background:linear-gradient(90deg,#121214 0,rgba(18,18,20,0) 18%,rgba(18,18,20,0) 82%,#121214 100%),repeating-linear-gradient(90deg,#121214 0 .9px,#202023 .9px 1.5px)"></div>
<div style="left:120.4px;top:444.4px;width:48px;height:48px;border-radius:50%;background:radial-gradient(circle,#0e0e10 0 22.6px,#141416 23.2px,#1c1c1f 24px)"></div>
<div style="left:125.3px;top:449.3px;width:38.2px;height:38.2px;border-radius:50%;background:conic-gradient(from 0deg,#ff2a75 0deg,#ff2ae0 38deg,#9a35ff 72deg,#2c45ff 100deg,#25b8ff 135deg,#25f0d0 160deg,#25f060 192deg,#40f025 222deg,#b8f025 250deg,#ffdc25 275deg,#ff8a25 305deg,#ff2a30 338deg,#ff2a75 360deg)"></div>
<div style="left:127.1px;top:451.1px;width:34.6px;height:34.6px;border-radius:50%;background:radial-gradient(circle,rgba(46,46,49,1) 0,rgba(44,44,47,.92) 45%,rgba(40,40,44,.72) 100%),conic-gradient(from 0deg,#ff2a75 0deg,#ff2ae0 38deg,#9a35ff 72deg,#2c45ff 100deg,#25b8ff 135deg,#25f0d0 160deg,#25f060 192deg,#40f025 222deg,#b8f025 250deg,#ffdc25 275deg,#ff8a25 305deg,#ff2a30 338deg,#ff2a75 360deg)"></div>
<div style="left:127.2px;top:468.1px;width:34.4px;height:0.6px;background:#4c4c4e;"></div>
<div style="left:144.1px;top:451.2px;width:0.6px;height:34.4px;background:#4c4c4e;"></div>
<svg style="left:0px;top:0px;" width="1" height="1" viewBox="0 0 1 1"><path d="M145.89 490.55A22.2 22.2 0 0 1 143.24 490.57" stroke="#e4e4e6" stroke-opacity="1.00" stroke-width="1.25" fill="none"/><path d="M148.29 490.26A22.2 22.2 0 0 1 145.66 490.56" stroke="#e4e4e6" stroke-opacity="1.00" stroke-width="1.25" fill="none"/><path d="M150.65 489.70A22.2 22.2 0 0 1 148.06 490.30" stroke="#e4e4e6" stroke-opacity="1.00" stroke-width="1.25" fill="none"/><path d="M152.93 488.90A22.2 22.2 0 0 1 150.43 489.77" stroke="#e4e4e6" stroke-opacity="1.00" stroke-width="1.25" fill="none"/><path d="M155.11 487.84A22.2 22.2 0 0 1 152.72 488.98" stroke="#e4e4e6" stroke-opacity="1.00" stroke-width="1.25" fill="none"/><path d="M157.17 486.56A22.2 22.2 0 0 1 154.91 487.96" stroke="#e4e4e6" stroke-opacity="1.00" stroke-width="1.25" fill="none"/><path d="M159.07 485.07A22.2 22.2 0 0 1 156.97 486.70" stroke="#e4e4e6" stroke-opacity="1.00" stroke-width="1.25" fill="none"/><path d="M160.79 483.37A22.2 22.2 0 0 1 158.89 485.22" stroke="#e4e4e6" stroke-opacity="1.00" stroke-width="1.25" fill="none"/><path d="M162.33 481.50A22.2 22.2 0 0 1 160.64 483.54" stroke="#e4e4e6" stroke-opacity="1.00" stroke-width="1.25" fill="none"/><path d="M163.65 479.47A22.2 22.2 0 0 1 162.19 481.68" stroke="#e4e4e6" stroke-opacity="0.96" stroke-width="1.25" fill="none"/><path d="M164.74 477.31A22.2 22.2 0 0 1 163.53 479.67" stroke="#e4e4e6" stroke-opacity="0.89" stroke-width="1.25" fill="none"/><path d="M165.58 475.04A22.2 22.2 0 0 1 164.64 477.52" stroke="#e4e4e6" stroke-opacity="0.81" stroke-width="1.25" fill="none"/><path d="M166.18 472.69A22.2 22.2 0 0 1 165.51 475.26" stroke="#e4e4e6" stroke-opacity="0.74" stroke-width="1.25" fill="none"/><path d="M166.52 470.30A22.2 22.2 0 0 1 166.13 472.92" stroke="#e4e4e6" stroke-opacity="0.66" stroke-width="1.25" fill="none"/><path d="M166.59 467.88A22.2 22.2 0 0 1 166.50 470.53" stroke="#e4e4e6" stroke-opacity="0.59" stroke-width="1.25" fill="none"/><path d="M166.40 465.46A22.2 22.2 0 0 1 166.60 468.11" stroke="#e4e4e6" stroke-opacity="0.52" stroke-width="1.25" fill="none"/><path d="M165.95 463.09A22.2 22.2 0 0 1 166.43 465.69" stroke="#e4e4e6" stroke-opacity="0.45" stroke-width="1.25" fill="none"/><path d="M165.25 460.77A22.2 22.2 0 0 1 166.01 463.31" stroke="#e4e4e6" stroke-opacity="0.39" stroke-width="1.25" fill="none"/><path d="M164.29 458.55A22.2 22.2 0 0 1 165.33 460.99" stroke="#e4e4e6" stroke-opacity="0.32" stroke-width="1.25" fill="none"/><path d="M163.10 456.44A22.2 22.2 0 0 1 164.40 458.76" stroke="#e4e4e6" stroke-opacity="0.26" stroke-width="1.25" fill="none"/><path d="M161.69 454.47A22.2 22.2 0 0 1 163.23 456.64" stroke="#e4e4e6" stroke-opacity="0.20" stroke-width="1.25" fill="none"/><path d="M160.07 452.67A22.2 22.2 0 0 1 161.83 454.66" stroke="#e4e4e6" stroke-opacity="0.14" stroke-width="1.25" fill="none"/><path d="M158.27 451.06A22.2 22.2 0 0 1 160.23 452.84" stroke="#e4e4e6" stroke-opacity="0.09" stroke-width="1.25" fill="none"/><path d="M156.30 449.66A22.2 22.2 0 0 1 158.45 451.21" stroke="#e4e4e6" stroke-opacity="0.04" stroke-width="1.25" fill="none"/></svg>
<div style="left:142.8px;top:466.8px;width:3.2px;height:3.2px;border-radius:50%;background:#f4f4f4"></div>
<span style="left:137px;top:426.4px;font-size:7px;color:#dcdcde;transform:scaleX(0.724);">ガンマ</span>
<svg style="left:0px;top:0px;" width="1" height="1" viewBox="0 0 1 1"><path d="M178.10 433.40A3 3 0 1 1 176.72 435.17" stroke="#707074" stroke-width="0.65" fill="none"/><path d="M178.24 433.21L175.37 434.46L178.19 435.49z" fill="#707074"/></svg>
<div style="left:106.2px;top:499.3px;width:17.15px;height:9.6px;background:#161618;border-radius:1px;"></div>
<span style="left:106.2px;width:17.15px;top:495px;text-align:center;font-size:7.1px;color:#dededf">0.00</span>
<div style="left:107.175px;top:511.15px;width:15.2px;height:1.3px;background:#dcdcde;border-radius:.6px"></div>
<div style="left:125.55px;top:499.3px;width:17.15px;height:9.6px;background:#161618;border-radius:1px;"></div>
<span style="left:125.55px;width:17.15px;top:495px;text-align:center;font-size:7.1px;color:#dededf">0.00</span>
<div style="left:126.525px;top:511.15px;width:15.2px;height:1.3px;background:#cf2a1e;border-radius:.6px"></div>
<div style="left:144.9px;top:499.3px;width:17.15px;height:9.6px;background:#161618;border-radius:1px;"></div>
<span style="left:144.9px;width:17.15px;top:495px;text-align:center;font-size:7.1px;color:#dededf">0.00</span>
<div style="left:145.875px;top:511.15px;width:15.2px;height:1.3px;background:#1fa32a;border-radius:.6px"></div>
<div style="left:164.25px;top:499.3px;width:17.15px;height:9.6px;background:#161618;border-radius:1px;"></div>
<span style="left:164.25px;width:17.15px;top:495px;text-align:center;font-size:7.1px;color:#dededf">0.00</span>
<div style="left:165.225px;top:511.15px;width:15.2px;height:1.3px;background:#1f55d6;border-radius:.6px"></div>
<div style="left:106.6px;top:518.2px;width:74.6px;height:7px;border-radius:3.5px;background:linear-gradient(90deg,#121214 0,rgba(18,18,20,0) 18%,rgba(18,18,20,0) 82%,#121214 100%),repeating-linear-gradient(90deg,#121214 0 .9px,#202023 .9px 1.5px)"></div>
<div style="left:215.4px;top:444.4px;width:48px;height:48px;border-radius:50%;background:radial-gradient(circle,#0e0e10 0 22.6px,#141416 23.2px,#1c1c1f 24px)"></div>
<div style="left:220.3px;top:449.3px;width:38.2px;height:38.2px;border-radius:50%;background:conic-gradient(from 0deg,#ff2a75 0deg,#ff2ae0 38deg,#9a35ff 72deg,#2c45ff 100deg,#25b8ff 135deg,#25f0d0 160deg,#25f060 192deg,#40f025 222deg,#b8f025 250deg,#ffdc25 275deg,#ff8a25 305deg,#ff2a30 338deg,#ff2a75 360deg)"></div>
<div style="left:222.1px;top:451.1px;width:34.6px;height:34.6px;border-radius:50%;background:radial-gradient(circle,rgba(46,46,49,1) 0,rgba(44,44,47,.92) 45%,rgba(40,40,44,.72) 100%),conic-gradient(from 0deg,#ff2a75 0deg,#ff2ae0 38deg,#9a35ff 72deg,#2c45ff 100deg,#25b8ff 135deg,#25f0d0 160deg,#25f060 192deg,#40f025 222deg,#b8f025 250deg,#ffdc25 275deg,#ff8a25 305deg,#ff2a30 338deg,#ff2a75 360deg)"></div>
<div style="left:222.2px;top:468.1px;width:34.4px;height:0.6px;background:#4c4c4e;"></div>
<div style="left:239.1px;top:451.2px;width:0.6px;height:34.4px;background:#4c4c4e;"></div>
<svg style="left:0px;top:0px;" width="1" height="1" viewBox="0 0 1 1"><path d="M239.07 446.20A22.2 22.2 0 0 1 241.72 446.32" stroke="#e4e4e6" stroke-opacity="1.00" stroke-width="1.25" fill="none"/><path d="M236.66 446.37A22.2 22.2 0 0 1 239.30 446.20" stroke="#e4e4e6" stroke-opacity="1.00" stroke-width="1.25" fill="none"/><path d="M234.27 446.80A22.2 22.2 0 0 1 236.89 446.34" stroke="#e4e4e6" stroke-opacity="1.00" stroke-width="1.25" fill="none"/><path d="M231.95 447.49A22.2 22.2 0 0 1 234.50 446.75" stroke="#e4e4e6" stroke-opacity="1.00" stroke-width="1.25" fill="none"/><path d="M229.72 448.42A22.2 22.2 0 0 1 232.17 447.41" stroke="#e4e4e6" stroke-opacity="1.00" stroke-width="1.25" fill="none"/><path d="M227.60 449.59A22.2 22.2 0 0 1 229.93 448.32" stroke="#e4e4e6" stroke-opacity="1.00" stroke-width="1.25" fill="none"/><path d="M225.63 450.99A22.2 22.2 0 0 1 227.80 449.47" stroke="#e4e4e6" stroke-opacity="1.00" stroke-width="1.25" fill="none"/><path d="M223.81 452.59A22.2 22.2 0 0 1 225.81 450.85" stroke="#e4e4e6" stroke-opacity="1.00" stroke-width="1.25" fill="none"/><path d="M222.18 454.38A22.2 22.2 0 0 1 223.98 452.43" stroke="#e4e4e6" stroke-opacity="1.00" stroke-width="1.25" fill="none"/><path d="M220.76 456.34A22.2 22.2 0 0 1 222.33 454.20" stroke="#e4e4e6" stroke-opacity="0.96" stroke-width="1.25" fill="none"/><path d="M219.56 458.44A22.2 22.2 0 0 1 220.89 456.15" stroke="#e4e4e6" stroke-opacity="0.89" stroke-width="1.25" fill="none"/><path d="M218.59 460.66A22.2 22.2 0 0 1 219.66 458.24" stroke="#e4e4e6" stroke-opacity="0.81" stroke-width="1.25" fill="none"/><path d="M217.87 462.97A22.2 22.2 0 0 1 218.67 460.44" stroke="#e4e4e6" stroke-opacity="0.74" stroke-width="1.25" fill="none"/><path d="M217.41 465.35A22.2 22.2 0 0 1 217.93 462.75" stroke="#e4e4e6" stroke-opacity="0.66" stroke-width="1.25" fill="none"/><path d="M217.21 467.76A22.2 22.2 0 0 1 217.44 465.12" stroke="#e4e4e6" stroke-opacity="0.59" stroke-width="1.25" fill="none"/><path d="M217.27 470.18A22.2 22.2 0 0 1 217.22 467.53" stroke="#e4e4e6" stroke-opacity="0.52" stroke-width="1.25" fill="none"/><path d="M217.60 472.58A22.2 22.2 0 0 1 217.25 469.95" stroke="#e4e4e6" stroke-opacity="0.45" stroke-width="1.25" fill="none"/><path d="M218.18 474.93A22.2 22.2 0 0 1 217.55 472.35" stroke="#e4e4e6" stroke-opacity="0.39" stroke-width="1.25" fill="none"/><path d="M219.02 477.20A22.2 22.2 0 0 1 218.11 474.71" stroke="#e4e4e6" stroke-opacity="0.32" stroke-width="1.25" fill="none"/><path d="M220.10 479.37A22.2 22.2 0 0 1 218.93 476.98" stroke="#e4e4e6" stroke-opacity="0.26" stroke-width="1.25" fill="none"/><path d="M221.41 481.40A22.2 22.2 0 0 1 219.98 479.16" stroke="#e4e4e6" stroke-opacity="0.20" stroke-width="1.25" fill="none"/><path d="M222.93 483.28A22.2 22.2 0 0 1 221.27 481.21" stroke="#e4e4e6" stroke-opacity="0.14" stroke-width="1.25" fill="none"/><path d="M224.65 484.99A22.2 22.2 0 0 1 222.77 483.11" stroke="#e4e4e6" stroke-opacity="0.09" stroke-width="1.25" fill="none"/><path d="M226.54 486.50A22.2 22.2 0 0 1 224.47 484.83" stroke="#e4e4e6" stroke-opacity="0.04" stroke-width="1.25" fill="none"/></svg>
<div style="left:233.8px;top:450.4px;width:3.2px;height:3.2px;border-radius:50%;background:#f4f4f4"></div>
<span style="left:232.2px;top:426.4px;font-size:7px;color:#dcdcde;transform:scaleX(0.776);">ゲイン</span>
<svg style="left:202.4px;top:432px;" width="9" height="9" viewBox="0 0 9 9"><path d="M3.6 .3v2.2M3.6 4.9v2.2M.2 3.7h2.2M4.8 3.7h2.2" stroke="#c8c8ca" stroke-width="0.6" fill="none" stroke-linecap="round" stroke-linejoin="round" /><circle cx="6.9" cy="6.6" r="1.3" fill="#f0f0f0"/></svg>
<svg style="left:0px;top:0px;" width="1" height="1" viewBox="0 0 1 1"><path d="M273.10 433.40A3 3 0 1 1 271.72 435.17" stroke="#707074" stroke-width="0.65" fill="none"/><path d="M273.24 433.21L270.37 434.46L273.19 435.49z" fill="#707074"/></svg>
<div style="left:201.2px;top:499.3px;width:17.15px;height:9.6px;background:#161618;border-radius:1px;"></div>
<span style="left:201.2px;width:17.15px;top:495px;text-align:center;font-size:7.1px;color:#dededf">1.00</span>
<div style="left:202.175px;top:511.15px;width:15.2px;height:1.3px;background:#dcdcde;border-radius:.6px"></div>
<div style="left:220.55px;top:499.3px;width:17.15px;height:9.6px;background:#161618;border-radius:1px;box-shadow:inset 0 0 0 .8px #c23a2e;"></div>
<span style="left:220.55px;width:17.15px;top:495px;text-align:center;font-size:7.1px;color:#dededf">3.00</span>
<div style="left:221.525px;top:511.15px;width:15.2px;height:1.3px;background:#cf2a1e;border-radius:.6px"></div>
<div style="left:239.9px;top:499.3px;width:17.15px;height:9.6px;background:#161618;border-radius:1px;"></div>
<span style="left:239.9px;width:17.15px;top:495px;text-align:center;font-size:7.1px;color:#dededf">1.00</span>
<div style="left:240.875px;top:511.15px;width:15.2px;height:1.3px;background:#1fa32a;border-radius:.6px"></div>
<div style="left:259.25px;top:499.3px;width:17.15px;height:9.6px;background:#161618;border-radius:1px;"></div>
<span style="left:259.25px;width:17.15px;top:495px;text-align:center;font-size:7.1px;color:#dededf">1.00</span>
<div style="left:260.225px;top:511.15px;width:15.2px;height:1.3px;background:#1f55d6;border-radius:.6px"></div>
<div style="left:201.6px;top:518.2px;width:74.6px;height:7px;border-radius:3.5px;background:linear-gradient(90deg,#121214 0,rgba(18,18,20,0) 18%,rgba(18,18,20,0) 82%,#121214 100%),repeating-linear-gradient(90deg,#121214 0 .9px,#202023 .9px 1.5px)"></div>
<div style="left:310.2px;top:444.4px;width:48px;height:48px;border-radius:50%;background:radial-gradient(circle,#0e0e10 0 22.6px,#141416 23.2px,#1c1c1f 24px)"></div>
<div style="left:315.1px;top:449.3px;width:38.2px;height:38.2px;border-radius:50%;background:conic-gradient(from 0deg,#ff2a75 0deg,#ff2ae0 38deg,#9a35ff 72deg,#2c45ff 100deg,#25b8ff 135deg,#25f0d0 160deg,#25f060 192deg,#40f025 222deg,#b8f025 250deg,#ffdc25 275deg,#ff8a25 305deg,#ff2a30 338deg,#ff2a75 360deg)"></div>
<div style="left:316.9px;top:451.1px;width:34.6px;height:34.6px;border-radius:50%;background:radial-gradient(circle,rgba(46,46,49,1) 0,rgba(44,44,47,.92) 45%,rgba(40,40,44,.72) 100%),conic-gradient(from 0deg,#ff2a75 0deg,#ff2ae0 38deg,#9a35ff 72deg,#2c45ff 100deg,#25b8ff 135deg,#25f0d0 160deg,#25f060 192deg,#40f025 222deg,#b8f025 250deg,#ffdc25 275deg,#ff8a25 305deg,#ff2a30 338deg,#ff2a75 360deg)"></div>
<div style="left:317px;top:468.1px;width:34.4px;height:0.6px;background:#4c4c4e;"></div>
<div style="left:333.9px;top:451.2px;width:0.6px;height:34.4px;background:#4c4c4e;"></div>
<svg style="left:0px;top:0px;" width="1" height="1" viewBox="0 0 1 1"><path d="M335.69 490.55A22.2 22.2 0 0 1 333.04 490.57" stroke="#e4e4e6" stroke-opacity="1.00" stroke-width="1.25" fill="none"/><path d="M338.09 490.26A22.2 22.2 0 0 1 335.46 490.56" stroke="#e4e4e6" stroke-opacity="1.00" stroke-width="1.25" fill="none"/><path d="M340.45 489.70A22.2 22.2 0 0 1 337.86 490.30" stroke="#e4e4e6" stroke-opacity="1.00" stroke-width="1.25" fill="none"/><path d="M342.73 488.90A22.2 22.2 0 0 1 340.23 489.77" stroke="#e4e4e6" stroke-opacity="1.00" stroke-width="1.25" fill="none"/><path d="M344.91 487.84A22.2 22.2 0 0 1 342.52 488.98" stroke="#e4e4e6" stroke-opacity="1.00" stroke-width="1.25" fill="none"/><path d="M346.97 486.56A22.2 22.2 0 0 1 344.71 487.96" stroke="#e4e4e6" stroke-opacity="1.00" stroke-width="1.25" fill="none"/><path d="M348.87 485.07A22.2 22.2 0 0 1 346.77 486.70" stroke="#e4e4e6" stroke-opacity="1.00" stroke-width="1.25" fill="none"/><path d="M350.59 483.37A22.2 22.2 0 0 1 348.69 485.22" stroke="#e4e4e6" stroke-opacity="1.00" stroke-width="1.25" fill="none"/><path d="M352.13 481.50A22.2 22.2 0 0 1 350.44 483.54" stroke="#e4e4e6" stroke-opacity="1.00" stroke-width="1.25" fill="none"/><path d="M353.45 479.47A22.2 22.2 0 0 1 351.99 481.68" stroke="#e4e4e6" stroke-opacity="0.96" stroke-width="1.25" fill="none"/><path d="M354.54 477.31A22.2 22.2 0 0 1 353.33 479.67" stroke="#e4e4e6" stroke-opacity="0.89" stroke-width="1.25" fill="none"/><path d="M355.38 475.04A22.2 22.2 0 0 1 354.44 477.52" stroke="#e4e4e6" stroke-opacity="0.81" stroke-width="1.25" fill="none"/><path d="M355.98 472.69A22.2 22.2 0 0 1 355.31 475.26" stroke="#e4e4e6" stroke-opacity="0.74" stroke-width="1.25" fill="none"/><path d="M356.32 470.30A22.2 22.2 0 0 1 355.93 472.92" stroke="#e4e4e6" stroke-opacity="0.66" stroke-width="1.25" fill="none"/><path d="M356.39 467.88A22.2 22.2 0 0 1 356.30 470.53" stroke="#e4e4e6" stroke-opacity="0.59" stroke-width="1.25" fill="none"/><path d="M356.20 465.46A22.2 22.2 0 0 1 356.40 468.11" stroke="#e4e4e6" stroke-opacity="0.52" stroke-width="1.25" fill="none"/><path d="M355.75 463.09A22.2 22.2 0 0 1 356.23 465.69" stroke="#e4e4e6" stroke-opacity="0.45" stroke-width="1.25" fill="none"/><path d="M355.05 460.77A22.2 22.2 0 0 1 355.81 463.31" stroke="#e4e4e6" stroke-opacity="0.39" stroke-width="1.25" fill="none"/><path d="M354.09 458.55A22.2 22.2 0 0 1 355.13 460.99" stroke="#e4e4e6" stroke-opacity="0.32" stroke-width="1.25" fill="none"/><path d="M352.90 456.44A22.2 22.2 0 0 1 354.20 458.76" stroke="#e4e4e6" stroke-opacity="0.26" stroke-width="1.25" fill="none"/><path d="M351.49 454.47A22.2 22.2 0 0 1 353.03 456.64" stroke="#e4e4e6" stroke-opacity="0.20" stroke-width="1.25" fill="none"/><path d="M349.87 452.67A22.2 22.2 0 0 1 351.63 454.66" stroke="#e4e4e6" stroke-opacity="0.14" stroke-width="1.25" fill="none"/><path d="M348.07 451.06A22.2 22.2 0 0 1 350.03 452.84" stroke="#e4e4e6" stroke-opacity="0.09" stroke-width="1.25" fill="none"/><path d="M346.10 449.66A22.2 22.2 0 0 1 348.25 451.21" stroke="#e4e4e6" stroke-opacity="0.04" stroke-width="1.25" fill="none"/></svg>
<div style="left:332.6px;top:466.8px;width:3.2px;height:3.2px;border-radius:50%;background:#f4f4f4"></div>
<span style="left:322.5px;top:426.4px;font-size:7px;color:#dcdcde;transform:scaleX(0.663);">オフセット</span>
<svg style="left:0px;top:0px;" width="1" height="1" viewBox="0 0 1 1"><path d="M367.90 433.40A3 3 0 1 1 366.52 435.17" stroke="#707074" stroke-width="0.65" fill="none"/><path d="M368.04 433.21L365.17 434.46L367.99 435.49z" fill="#707074"/></svg>
<div style="left:296px;top:499.3px;width:23.6px;height:9.6px;background:#161618;border-radius:1px;"></div>
<span style="left:296px;width:23.6px;top:495px;text-align:center;font-size:7.1px;color:#dededf">25.00</span>
<div style="left:300.2px;top:511.15px;width:15.2px;height:1.3px;background:#cf2a1e;border-radius:.6px"></div>
<div style="left:321.8px;top:499.3px;width:23.6px;height:9.6px;background:#161618;border-radius:1px;"></div>
<span style="left:321.8px;width:23.6px;top:495px;text-align:center;font-size:7.1px;color:#dededf">25.00</span>
<div style="left:326px;top:511.15px;width:15.2px;height:1.3px;background:#1fa32a;border-radius:.6px"></div>
<div style="left:347.6px;top:499.3px;width:23.6px;height:9.6px;background:#161618;border-radius:1px;"></div>
<span style="left:347.6px;width:23.6px;top:495px;text-align:center;font-size:7.1px;color:#dededf">25.00</span>
<div style="left:351.8px;top:511.15px;width:15.2px;height:1.3px;background:#1f55d6;border-radius:.6px"></div>
<div style="left:296.4px;top:518.2px;width:74.6px;height:7px;border-radius:3.5px;background:linear-gradient(90deg,#121214 0,rgba(18,18,20,0) 18%,rgba(18,18,20,0) 82%,#121214 100%),repeating-linear-gradient(90deg,#121214 0 .9px,#202023 .9px 1.5px)"></div>
<span style="left:5px;top:531.4px;font-size:6.2px;color:#737377;transform:scaleX(0.828);">カラーブースト</span>
<div style="left:45.8px;top:536.8px;width:23.4px;height:9px;background:#161618;border-radius:1px;"></div>
<span style="left:45.8px;width:23.4px;top:532.15px;text-align:center;font-size:7.1px;color:#dededf">0.00</span>
<div style="left:50.4px;top:547.35px;width:14px;height:1.3px;background:linear-gradient(90deg,#0a0a0c 0,#0a0a0c 30%,#6a2a90 40%,#28a040 55%,#2858d8 70%,#c02060 88%,#d02040 100%);border-radius:.6px"></div>
<span style="left:81.4px;top:531.4px;font-size:6.2px;color:#737377;transform:scaleX(0.772);">シャドウ</span>
<div style="left:103.8px;top:536.8px;width:23.4px;height:9px;background:#161618;border-radius:1px;"></div>
<span style="left:103.8px;width:23.4px;top:532.15px;text-align:center;font-size:7.1px;color:#dededf">0.00</span>
<div style="left:108.4px;top:547.35px;width:14px;height:1.3px;background:linear-gradient(90deg,#050506,#1c1c1e);border-radius:.6px"></div>
<span style="left:137px;top:531.4px;font-size:6.2px;color:#737377;transform:scaleX(0.762);">ハイライト</span>
<div style="left:164px;top:536.8px;width:23.4px;height:9px;background:#161618;border-radius:1px;"></div>
<span style="left:164px;width:23.4px;top:532.15px;text-align:center;font-size:7.1px;color:#dededf">0.00</span>
<div style="left:168.6px;top:547.35px;width:14px;height:1.3px;background:linear-gradient(90deg,#444,#f0f0f0);border-radius:.6px"></div>
<span style="left:208.9px;top:531.4px;font-size:6.2px;color:#737377;transform:scaleX(1.010);">彩度</span>
<div style="left:224px;top:536.8px;width:23.4px;height:9px;background:#161618;border-radius:1px;"></div>
<span style="left:224px;width:23.4px;top:532.15px;text-align:center;font-size:7.1px;color:#dededf">50.00</span>
<div style="left:228.6px;top:547.35px;width:14px;height:1.3px;background:linear-gradient(90deg,#0a0a0c 0,#0a0a0c 30%,#6a2a90 40%,#28a040 55%,#2858d8 70%,#c02060 88%,#d02040 100%);border-radius:.6px"></div>
<span style="left:269.2px;top:531.4px;font-size:6.2px;color:#737377;transform:scaleX(1.010);">色相</span>
<div style="left:285.2px;top:536.8px;width:23.4px;height:9px;background:#161618;border-radius:1px;"></div>
<span style="left:285.2px;width:23.4px;top:532.15px;text-align:center;font-size:7.1px;color:#dededf">50.00</span>
<div style="left:289.8px;top:547.35px;width:14px;height:1.3px;background:linear-gradient(90deg,#0a0a0c 0,#0a0a0c 30%,#6a2a90 40%,#28a040 55%,#2858d8 70%,#c02060 88%,#d02040 100%);border-radius:.6px"></div>
<span style="left:315px;top:531.4px;font-size:6.2px;color:#737377;transform:scaleX(0.825);">輝度ミックス</span>
<div style="left:348.3px;top:536.8px;width:23.4px;height:9px;background:#161618;border-radius:1px;"></div>
<span style="left:348.3px;width:23.4px;top:532.15px;text-align:center;font-size:7.1px;color:#dededf">100.00</span>
<div style="left:352.9px;top:547.35px;width:14px;height:1.3px;background:linear-gradient(90deg,#c02030 0,#30b030 25%,#2858d8 48%,#d8d8e0 70%,#e8e8e8 100%);border-radius:.6px"></div>
<div style="left:396.2px;top:417.4px;width:234px;height:122px;background:#29292d;"></div>
<svg style="left:0px;top:0px;" width="1" height="1" viewBox="0 0 1 1"><path d="M422.00 417.4V539.4" stroke="#2e2e32" stroke-width=".5"/><path d="M431.60 417.4V539.4" stroke="#2e2e32" stroke-width=".5"/><path d="M441.20 417.4V539.4" stroke="#2e2e32" stroke-width=".5"/><path d="M450.80 417.4V539.4" stroke="#2e2e32" stroke-width=".5"/><path d="M460.40 417.4V539.4" stroke="#2e2e32" stroke-width=".5"/><path d="M470.00 417.4V539.4" stroke="#2e2e32" stroke-width=".5"/><path d="M479.60 417.4V539.4" stroke="#2e2e32" stroke-width=".5"/><path d="M489.20 417.4V539.4" stroke="#2e2e32" stroke-width=".5"/><path d="M498.80 417.4V539.4" stroke="#2e2e32" stroke-width=".5"/><path d="M508.40 417.4V539.4" stroke="#2e2e32" stroke-width=".5"/><path d="M518.00 417.4V539.4" stroke="#2e2e32" stroke-width=".5"/><path d="M527.60 417.4V539.4" stroke="#2e2e32" stroke-width=".5"/><path d="M537.20 417.4V539.4" stroke="#2e2e32" stroke-width=".5"/><path d="M546.80 417.4V539.4" stroke="#2e2e32" stroke-width=".5"/><path d="M556.40 417.4V539.4" stroke="#2e2e32" stroke-width=".5"/><path d="M566.00 417.4V539.4" stroke="#2e2e32" stroke-width=".5"/><path d="M575.60 417.4V539.4" stroke="#2e2e32" stroke-width=".5"/><path d="M585.20 417.4V539.4" stroke="#2e2e32" stroke-width=".5"/><path d="M594.80 417.4V539.4" stroke="#2e2e32" stroke-width=".5"/><path d="M604.40 417.4V539.4" stroke="#2e2e32" stroke-width=".5"/><path d="M614.00 417.4V539.4" stroke="#2e2e32" stroke-width=".5"/><path d="M623.60 417.4V539.4" stroke="#2e2e32" stroke-width=".5"/><path d="M396.2 418.70H630.2" stroke="#2e2e32" stroke-width=".5"/><path d="M396.2 423.50H630.2" stroke="#2e2e32" stroke-width=".5"/><path d="M396.2 428.30H630.2" stroke="#2e2e32" stroke-width=".5"/><path d="M396.2 433.10H630.2" stroke="#2e2e32" stroke-width=".5"/><path d="M396.2 437.90H630.2" stroke="#2e2e32" stroke-width=".5"/><path d="M396.2 442.70H630.2" stroke="#2e2e32" stroke-width=".5"/><path d="M396.2 447.50H630.2" stroke="#2e2e32" stroke-width=".5"/><path d="M396.2 452.30H630.2" stroke="#2e2e32" stroke-width=".5"/><path d="M396.2 457.10H630.2" stroke="#2e2e32" stroke-width=".5"/><path d="M396.2 461.90H630.2" stroke="#2e2e32" stroke-width=".5"/><path d="M396.2 466.70H630.2" stroke="#2e2e32" stroke-width=".5"/><path d="M396.2 471.50H630.2" stroke="#2e2e32" stroke-width=".5"/><path d="M396.2 476.30H630.2" stroke="#2e2e32" stroke-width=".5"/><path d="M396.2 481.10H630.2" stroke="#2e2e32" stroke-width=".5"/><path d="M396.2 485.90H630.2" stroke="#2e2e32" stroke-width=".5"/><path d="M396.2 490.70H630.2" stroke="#2e2e32" stroke-width=".5"/><path d="M396.2 495.50H630.2" stroke="#2e2e32" stroke-width=".5"/><path d="M396.2 500.30H630.2" stroke="#2e2e32" stroke-width=".5"/><path d="M396.2 505.10H630.2" stroke="#2e2e32" stroke-width=".5"/><path d="M396.2 509.90H630.2" stroke="#2e2e32" stroke-width=".5"/><path d="M396.2 514.70H630.2" stroke="#2e2e32" stroke-width=".5"/><path d="M396.2 519.50H630.2" stroke="#2e2e32" stroke-width=".5"/><path d="M396.2 524.30H630.2" stroke="#2e2e32" stroke-width=".5"/><path d="M396.2 529.10H630.2" stroke="#2e2e32" stroke-width=".5"/><path d="M396.2 533.90H630.2" stroke="#2e2e32" stroke-width=".5"/><path d="M396.2 538.70H630.2" stroke="#2e2e32" stroke-width=".5"/><path d="M441.20 417.4V539.4" stroke="#38383c" stroke-width=".7"/><path d="M489.20 417.4V539.4" stroke="#38383c" stroke-width=".7"/><path d="M537.20 417.4V539.4" stroke="#38383c" stroke-width=".7"/><path d="M585.20 417.4V539.4" stroke="#38383c" stroke-width=".7"/><path d="M396.2 442.70H630.2" stroke="#38383c" stroke-width=".7"/><path d="M396.2 466.70H630.2" stroke="#38383c" stroke-width=".7"/><path d="M396.2 490.70H630.2" stroke="#38383c" stroke-width=".7"/><path d="M396.2 514.70H630.2" stroke="#38383c" stroke-width=".7"/><path d="M396.2 538.70H630.2" stroke="#38383c" stroke-width=".7"/><polygon points="397.6,537.8 397.6,516.5 398.6,516.2 399.5,518.5 400.4,512.4 401.4,512.3 402.3,515.0 403.3,516.9 404.2,518.0 405.2,514.5 406.1,518.9 407.1,514.5 408.0,514.9 409.0,516.0 409.9,514.6 410.9,518.0 411.8,518.4 412.8,516.6 413.7,515.6 414.7,515.7 415.6,510.6 416.6,514.1 417.5,510.6 418.5,512.6 419.4,516.4 420.4,511.5 421.3,515.6 422.3,516.3 423.2,517.1 424.2,512.2 425.1,513.9 426.1,510.5 427.0,515.3 428.0,512.0 428.9,516.3 429.9,515.9 430.8,515.0 431.8,514.5 432.7,518.7 433.7,514.6 434.6,514.0 435.6,514.8 436.5,518.6 437.5,514.4 438.4,515.7 439.4,517.7 440.3,514.8 441.3,519.4 442.2,516.0 443.2,518.9 444.1,512.4 445.1,519.4 446.0,515.3 447.0,513.9 447.9,518.3 448.9,515.0 449.8,514.7 450.8,514.3 451.7,514.9 452.7,512.4 453.6,514.3 454.6,512.0 455.5,516.7 456.5,514.9 457.4,516.8 458.4,516.6 459.3,514.4 460.3,515.4 461.2,511.2 462.2,514.7 463.1,514.0 464.1,515.6 465.0,515.1 466.0,513.9 466.9,514.5 467.9,512.3 468.8,517.2 469.8,512.9 470.7,513.6 471.7,511.5 472.6,516.0 473.6,515.4 474.5,515.1 475.5,515.2 476.4,511.5 477.4,516.8 478.3,519.0 479.3,514.2 480.2,512.9 481.2,514.9 482.1,514.4 483.1,515.2 484.0,513.6 485.0,510.7 485.9,511.6 485.9,537.8" fill="#1c4519"/><polyline points="397.6,516.5 398.6,516.2 399.5,518.5 400.4,512.4 401.4,512.3 402.3,515.0 403.3,516.9 404.2,518.0 405.2,514.5 406.1,518.9 407.1,514.5 408.0,514.9 409.0,516.0 409.9,514.6 410.9,518.0 411.8,518.4 412.8,516.6 413.7,515.6 414.7,515.7 415.6,510.6 416.6,514.1 417.5,510.6 418.5,512.6 419.4,516.4 420.4,511.5 421.3,515.6 422.3,516.3 423.2,517.1 424.2,512.2 425.1,513.9 426.1,510.5 427.0,515.3 428.0,512.0 428.9,516.3 429.9,515.9 430.8,515.0 431.8,514.5 432.7,518.7 433.7,514.6 434.6,514.0 435.6,514.8 436.5,518.6 437.5,514.4 438.4,515.7 439.4,517.7 440.3,514.8 441.3,519.4 442.2,516.0 443.2,518.9 444.1,512.4 445.1,519.4 446.0,515.3 447.0,513.9 447.9,518.3 448.9,515.0 449.8,514.7 450.8,514.3 451.7,514.9 452.7,512.4 453.6,514.3 454.6,512.0 455.5,516.7 456.5,514.9 457.4,516.8 458.4,516.6 459.3,514.4 460.3,515.4 461.2,511.2 462.2,514.7 463.1,514.0 464.1,515.6 465.0,515.1 466.0,513.9 466.9,514.5 467.9,512.3 468.8,517.2 469.8,512.9 470.7,513.6 471.7,511.5 472.6,516.0 473.6,515.4 474.5,515.1 475.5,515.2 476.4,511.5 477.4,516.8 478.3,519.0 479.3,514.2 480.2,512.9 481.2,514.9 482.1,514.4 483.1,515.2 484.0,513.6 485.0,510.7 485.9,511.6" fill="none" stroke="#2f8226" stroke-width=".7"/><polygon points="397.6,537.8 397.6,525.2 399.2,524.2 400.5,521.7 401.6,525.3 402.8,527.7 403.9,524.9 405.1,524.3 406.7,523.6 408.0,521.3 409.1,525.5 410.3,526.3 411.4,525.6 413.3,524.1 414.9,523.5 416.2,521.2 417.3,524.6 418.5,527.8 419.6,524.5 419.5,525.1 421.1,524.2 422.3,521.8 423.5,525.2 424.7,528.0 425.8,524.8 426.2,525.1 427.8,524.5 429.1,520.2 430.2,524.8 431.4,528.9 432.5,524.3 434.0,524.4 435.5,524.8 436.8,522.2 438.0,524.5 439.1,528.4 440.3,525.5 441.1,524.0 442.7,524.4 444.0,520.9 445.1,524.9 446.3,527.1 447.4,524.7 449.3,524.2 450.9,523.6 452.2,520.4 453.3,525.6 454.5,526.5 455.6,525.0 456.4,524.1 458.0,524.4 459.3,521.7 460.4,525.1 461.6,528.1 462.7,524.6 464.6,525.1 466.2,523.8 467.5,520.7 468.6,525.7 469.8,527.7 470.9,524.3 472.9,525.0 474.4,524.0 475.7,521.9 476.9,524.6 478.0,526.8 479.2,525.0 479.5,524.5 481.1,524.8 482.4,521.3 483.5,525.3 484.7,528.1 485.8,524.5 486.0,524.2 487.6,509.5 488.8,510.4 489.8,501.2 490.7,510.8 491.6,513.3 492.5,509.6 492.4,510.4 493.7,509.2 494.7,499.9 495.6,510.8 496.5,511.7 497.4,509.7 498.4,510.1 499.6,510.2 500.6,504.6 501.5,510.2 502.4,512.8 503.3,509.8 503.2,509.2 504.4,509.0 505.4,503.0 506.3,510.7 507.2,511.8 508.1,510.1 509.4,510.3 510.7,509.8 511.7,498.5 512.6,509.8 513.5,512.0 514.4,511.0 515.4,510.2 516.6,509.6 517.6,499.7 518.5,510.3 519.4,512.5 520.3,509.5 521.1,510.4 522.3,510.0 523.3,501.1 524.2,511.3 525.1,513.1 526.0,510.6 527.3,510.5 528.6,510.3 529.6,499.9 530.5,510.8 531.4,512.2 532.3,510.4 533.1,510.9 534.3,510.3 535.4,504.7 536.2,510.4 537.1,513.3 538.0,510.4 538.6,510.5 539.8,508.8 540.9,500.2 541.7,510.6 542.6,511.3 543.5,510.7 544.2,509.6 545.4,508.7 546.4,500.9 547.3,510.9 548.2,512.8 549.1,509.7 550.5,510.7 551.0,537.8" fill="#4c4c50"/><polyline points="487.4,512.2 488.3,515.2 489.3,515.5 490.2,515.8 491.2,516.5 492.1,518.6 493.1,518.1 494.0,514.2 495.0,518.4 495.9,514.3 496.9,516.1 497.8,517.0 498.8,515.1 499.7,516.8 500.7,516.6 501.6,517.5 502.6,515.3 503.5,517.7 504.5,520.2 505.4,517.4 506.4,513.9 507.3,520.1 508.3,520.1 509.2,518.6 510.2,515.5 511.1,519.6 512.1,516.7 513.0,513.1 514.0,517.7 514.9,514.6 515.9,518.2 516.8,514.7 517.8,517.7 518.8,516.5 519.7,519.6 520.7,516.3 521.6,514.4 522.6,517.0 523.5,516.3 524.5,513.6 525.4,513.5 526.4,518.8 527.3,512.8 528.3,514.8 529.2,516.2 530.2,514.9 530.7,537.8" fill="none" stroke="#2c6a26" stroke-width=".65"/><polyline points="397.6,525.2 399.2,524.2 400.5,521.7 401.6,525.3 402.8,527.7 403.9,524.9 405.1,524.3 406.7,523.6 408.0,521.3 409.1,525.5 410.3,526.3 411.4,525.6 413.3,524.1 414.9,523.5 416.2,521.2 417.3,524.6 418.5,527.8 419.6,524.5 419.5,525.1 421.1,524.2 422.3,521.8 423.5,525.2 424.7,528.0 425.8,524.8 426.2,525.1 427.8,524.5 429.1,520.2 430.2,524.8 431.4,528.9 432.5,524.3 434.0,524.4 435.5,524.8 436.8,522.2 438.0,524.5 439.1,528.4 440.3,525.5 441.1,524.0 442.7,524.4 444.0,520.9 445.1,524.9 446.3,527.1 447.4,524.7 449.3,524.2 450.9,523.6 452.2,520.4 453.3,525.6 454.5,526.5 455.6,525.0 456.4,524.1 458.0,524.4 459.3,521.7 460.4,525.1 461.6,528.1 462.7,524.6 464.6,525.1 466.2,523.8 467.5,520.7 468.6,525.7 469.8,527.7 470.9,524.3 472.9,525.0 474.4,524.0 475.7,521.9 476.9,524.6 478.0,526.8 479.2,525.0 479.5,524.5 481.1,524.8 482.4,521.3 483.5,525.3 484.7,528.1 485.8,524.5 486.0,524.2 487.6,509.5 488.8,510.4 489.8,501.2 490.7,510.8 491.6,513.3 492.5,509.6 492.4,510.4 493.7,509.2 494.7,499.9 495.6,510.8 496.5,511.7 497.4,509.7 498.4,510.1 499.6,510.2 500.6,504.6 501.5,510.2 502.4,512.8 503.3,509.8 503.2,509.2 504.4,509.0 505.4,503.0 506.3,510.7 507.2,511.8 508.1,510.1 509.4,510.3 510.7,509.8 511.7,498.5 512.6,509.8 513.5,512.0 514.4,511.0 515.4,510.2 516.6,509.6 517.6,499.7 518.5,510.3 519.4,512.5 520.3,509.5 521.1,510.4 522.3,510.0 523.3,501.1 524.2,511.3 525.1,513.1 526.0,510.6 527.3,510.5 528.6,510.3 529.6,499.9 530.5,510.8 531.4,512.2 532.3,510.4 533.1,510.9 534.3,510.3 535.4,504.7 536.2,510.4 537.1,513.3 538.0,510.4 538.6,510.5 539.8,508.8 540.9,500.2 541.7,510.6 542.6,511.3 543.5,510.7 544.2,509.6 545.4,508.7 546.4,500.9 547.3,510.9 548.2,512.8 549.1,509.7 550.5,510.7 551.0,537.8" fill="none" stroke="#b4b4b6" stroke-width=".7"/><path d="M397 537.8H630V420.6" stroke="#7c3029" stroke-width=".6" fill="none"/><path d="M397 424V537.8" stroke="#a8a8aa" stroke-width=".9" fill="none"/><path d="M397 538L630 420.6" stroke="#e6e6e8" stroke-width="1" fill="none"/><circle cx="397" cy="538" r="2.1" fill="#1c1c1e" stroke="#eeeeee" stroke-width=".9"/><circle cx="630" cy="420.6" r="2" fill="#f0f0f0"/><path d="M390.8 418.4a.8 .8 0 0 1 .8-.8h2.6l2.6 3.7-2.6 3.7h-2.6a.8 .8 0 0 1-.8-.8z" fill="#dcdcde"/></svg>
<div style="left:633px;top:412.5px;width:1px;height:133.1px;background:#19191b;"></div>
<div style="left:643.4px;top:407px;width:1.2px;height:144px;background:#1b1b1d;"></div>
<span style="left:649px;top:408px;font-size:6.4px;color:#d8d8da;transform:scaleX(0.986);">編集</span>
<svg style="left:683.4px;top:414.8px;" width="7" height="7" viewBox="0 0 7 7"><g transform="rotate(-45 3.2 3.2)"><rect x=".2" y="2" width="3.6" height="2.4" rx="1.2" stroke="#d8d8da" stroke-width=".8" fill="none"/><rect x="2.8" y="2" width="3.6" height="2.4" rx="1.2" stroke="#d8d8da" stroke-width=".8" fill="none"/></g></svg>
<div style="left:692px;top:412.5px;width:10.8px;height:11.1px;background:#e4e4e6;border-radius:1.4px"></div>
<span style="left:692px;width:10.8px;top:408.35px;text-align:center;font-size:5.6px;color:#444">Y</span>
<div style="left:705.6px;top:412.5px;width:10.6px;height:11.1px;background:#e3201c;border-radius:1.4px"></div>
<span style="left:705.6px;width:10.6px;top:408.35px;text-align:center;font-size:5.6px;color:#8a1410">R</span>
<div style="left:718.9px;top:412.5px;width:10.6px;height:11.1px;background:#1fc32a;border-radius:1.4px"></div>
<span style="left:718.9px;width:10.6px;top:408.35px;text-align:center;font-size:5.6px;color:#0e6a14">G</span>
<div style="left:732.2px;top:412.5px;width:10.8px;height:11.1px;background:#1546e8;border-radius:1.4px"></div>
<span style="left:732.2px;width:10.8px;top:408.35px;text-align:center;font-size:5.6px;color:#0a2890">B</span>
<svg style="left:0px;top:0px;" width="1" height="1" viewBox="0 0 1 1"><path d="M756.25 415.32A3.1 3.1 0 1 1 754.82 417.15" stroke="#77777b" stroke-width="0.7" fill="none"/><path d="M756.40 415.12L753.48 416.43L756.30 417.45z" fill="#77777b"/></svg>
<div style="left:651.4px;top:433.9px;width:57.2px;height:1px;background:#121214;"></div>
<div style="left:707.9px;top:432.3px;width:4.2px;height:4.2px;border-radius:50%;background:#e8e8ea"></div>
<div style="left:718.3px;top:429.6px;width:24.7px;height:9.6px;background:#161618;border-radius:1px;"></div>
<span style="left:718.3px;width:24.7px;top:425.15px;text-align:center;font-size:6.6px;color:#dededf">100</span>
<svg style="left:0px;top:0px;" width="1" height="1" viewBox="0 0 1 1"><path d="M756.25 431.72A3.1 3.1 0 1 1 754.82 433.55" stroke="#77777b" stroke-width="0.7" fill="none"/><path d="M756.40 431.52L753.48 432.83L756.30 433.85z" fill="#77777b"/></svg>
<div style="left:651.4px;top:446.8px;width:57.2px;height:1px;background:#121214;"></div>
<div style="left:707.9px;top:445.2px;width:4.2px;height:4.2px;border-radius:50%;background:#e0202a"></div>
<div style="left:718.3px;top:442.5px;width:24.7px;height:9.6px;background:#161618;border-radius:1px;"></div>
<span style="left:718.3px;width:24.7px;top:438.05px;text-align:center;font-size:6.6px;color:#dededf">100</span>
<svg style="left:0px;top:0px;" width="1" height="1" viewBox="0 0 1 1"><path d="M756.25 444.62A3.1 3.1 0 1 1 754.82 446.45" stroke="#77777b" stroke-width="0.7" fill="none"/><path d="M756.40 444.42L753.48 445.73L756.30 446.75z" fill="#77777b"/></svg>
<div style="left:651.4px;top:459.7px;width:57.2px;height:1px;background:#121214;"></div>
<div style="left:707.9px;top:458.1px;width:4.2px;height:4.2px;border-radius:50%;background:#22b822"></div>
<div style="left:718.3px;top:455.4px;width:24.7px;height:9.6px;background:#161618;border-radius:1px;"></div>
<span style="left:718.3px;width:24.7px;top:450.95px;text-align:center;font-size:6.6px;color:#dededf">100</span>
<svg style="left:0px;top:0px;" width="1" height="1" viewBox="0 0 1 1"><path d="M756.25 457.52A3.1 3.1 0 1 1 754.82 459.35" stroke="#77777b" stroke-width="0.7" fill="none"/><path d="M756.40 457.32L753.48 458.63L756.30 459.65z" fill="#77777b"/></svg>
<div style="left:651.4px;top:472.6px;width:57.2px;height:1px;background:#121214;"></div>
<div style="left:707.9px;top:471px;width:4.2px;height:4.2px;border-radius:50%;background:#1848f0"></div>
<div style="left:718.3px;top:468.3px;width:24.7px;height:9.6px;background:#161618;border-radius:1px;"></div>
<span style="left:718.3px;width:24.7px;top:463.85px;text-align:center;font-size:6.6px;color:#dededf">100</span>
<svg style="left:0px;top:0px;" width="1" height="1" viewBox="0 0 1 1"><path d="M756.25 470.42A3.1 3.1 0 1 1 754.82 472.25" stroke="#77777b" stroke-width="0.7" fill="none"/><path d="M756.40 470.22L753.48 471.53L756.30 472.55z" fill="#77777b"/></svg>
<div style="left:649px;top:483.5px;width:113.8px;height:0.8px;background:#3a3a3e;"></div>
<span style="left:649px;top:485px;font-size:6.4px;color:#d8d8da;transform:scaleX(0.693);">ソフトクリップ</span>
<svg style="left:695px;top:491.6px;" width="7" height="7" viewBox="0 0 7 7"><g transform="rotate(-45 3.2 3.2)"><rect x=".2" y="2" width="3.6" height="2.4" rx="1.2" stroke="#d8d8da" stroke-width=".8" fill="none"/><rect x="2.8" y="2" width="3.6" height="2.4" rx="1.2" stroke="#d8d8da" stroke-width=".8" fill="none"/></g></svg>
<div style="left:703.6px;top:489.4px;width:11.1px;height:10.8px;background:#e3201c;border-radius:1.4px"></div>
<span style="left:703.6px;width:11.1px;top:485.1px;text-align:center;font-size:5.6px;color:#8a1410">R</span>
<div style="left:717.5px;top:489.4px;width:11.1px;height:10.8px;background:#1fc32a;border-radius:1.4px"></div>
<span style="left:717.5px;width:11.1px;top:485.1px;text-align:center;font-size:5.6px;color:#0e6a14">G</span>
<div style="left:731.4px;top:489.4px;width:11.1px;height:10.8px;background:#1546e8;border-radius:1.4px"></div>
<span style="left:731.4px;width:11.1px;top:485.1px;text-align:center;font-size:5.6px;color:#0a2890">B</span>
<svg style="left:0px;top:0px;" width="1" height="1" viewBox="0 0 1 1"><path d="M756.25 492.32A3.1 3.1 0 1 1 754.82 494.15" stroke="#77777b" stroke-width="0.7" fill="none"/><path d="M756.40 492.12L753.48 493.43L756.30 494.45z" fill="#77777b"/></svg>
<span style="left:655px;top:507px;font-size:6.6px;color:#7a7a7e;transform:scaleX(0.736);">ロー</span>
<div style="left:670.3px;top:512.2px;width:26.4px;height:9.4px;background:#161618;border-radius:1px;"></div>
<span style="left:670.3px;width:26.4px;top:507.65px;text-align:center;font-size:6.6px;color:#dededf">50.0</span>
<span style="left:707.8px;top:507px;font-size:6.6px;color:#7a7a7e;transform:scaleX(0.597);">ハイ</span>
<div style="left:725px;top:512.2px;width:26.4px;height:9.4px;background:#161618;border-radius:1px;"></div>
<span style="left:725px;width:26.4px;top:507.65px;text-align:center;font-size:6.6px;color:#dededf">50.0</span>
<span style="left:655px;top:520px;font-size:6.8px;color:#7a7a7e;transform:scaleX(0.819);">L.S.</span>
<div style="left:670.3px;top:525.2px;width:26.4px;height:9.4px;background:#161618;border-radius:1px;"></div>
<span style="left:670.3px;width:26.4px;top:520.65px;text-align:center;font-size:6.6px;color:#dededf">0.0</span>
<span style="left:707.8px;top:520px;font-size:6.8px;color:#7a7a7e;transform:scaleX(0.878);">H.S.</span>
<div style="left:725px;top:525.2px;width:26.4px;height:9.4px;background:#161618;border-radius:1px;"></div>
<span style="left:725px;width:26.4px;top:520.65px;text-align:center;font-size:6.6px;color:#dededf">0.0</span>
<span style="left:760px;width:28.6px;top:401.50px;text-align:right;font-size:6.6px;color:#c9a227">1023</span>
<span style="left:760px;width:28.6px;top:417.40px;text-align:right;font-size:6.6px;color:#c9a227">896</span>
<span style="left:760px;width:28.6px;top:433.43px;text-align:right;font-size:6.6px;color:#c9a227">768</span>
<span style="left:760px;width:28.6px;top:449.46px;text-align:right;font-size:6.6px;color:#c9a227">640</span>
<span style="left:760px;width:28.6px;top:465.49px;text-align:right;font-size:6.6px;color:#c9a227">512</span>
<span style="left:760px;width:28.6px;top:481.52px;text-align:right;font-size:6.6px;color:#c9a227">384</span>
<span style="left:760px;width:28.6px;top:497.54px;text-align:right;font-size:6.6px;color:#c9a227">256</span>
<span style="left:760px;width:28.6px;top:513.57px;text-align:right;font-size:6.6px;color:#c9a227">128</span>
<span style="left:760px;width:28.6px;top:529.60px;text-align:right;font-size:6.6px;color:#c9a227">0</span>
<svg style="left:0px;top:0px;" width="1" height="1" viewBox="0 0 1 1"><path d="M793.2 411.50H1020.2" stroke="#5f5013" stroke-width=".9"/><path d="M793.2 427.50H1020.2" stroke="#5f5013" stroke-width=".9"/><path d="M793.2 443.50H1020.2" stroke="#5f5013" stroke-width=".9"/><path d="M793.2 459.50H1020.2" stroke="#5f5013" stroke-width=".9"/><path d="M793.2 475.50H1020.2" stroke="#5f5013" stroke-width=".9"/><path d="M793.2 491.50H1020.2" stroke="#5f5013" stroke-width=".9"/><path d="M793.2 507.50H1020.2" stroke="#5f5013" stroke-width=".9"/><path d="M793.2 523.50H1020.2" stroke="#5f5013" stroke-width=".9"/><path d="M793.2 539.50H1020.2" stroke="#5f5013" stroke-width=".9"/><path d="M793.2 535.19h3.6" stroke="#57480f" stroke-width=".5"/><path d="M793.2 531.19h3.6" stroke="#57480f" stroke-width=".5"/><path d="M793.2 527.18h3.6" stroke="#57480f" stroke-width=".5"/><path d="M793.2 519.16h3.6" stroke="#57480f" stroke-width=".5"/><path d="M793.2 515.16h3.6" stroke="#57480f" stroke-width=".5"/><path d="M793.2 511.15h3.6" stroke="#57480f" stroke-width=".5"/><path d="M793.2 503.14h3.6" stroke="#57480f" stroke-width=".5"/><path d="M793.2 499.13h3.6" stroke="#57480f" stroke-width=".5"/><path d="M793.2 495.12h3.6" stroke="#57480f" stroke-width=".5"/><path d="M793.2 487.11h3.6" stroke="#57480f" stroke-width=".5"/><path d="M793.2 483.10h3.6" stroke="#57480f" stroke-width=".5"/><path d="M793.2 479.09h3.6" stroke="#57480f" stroke-width=".5"/><path d="M793.2 471.08h3.6" stroke="#57480f" stroke-width=".5"/><path d="M793.2 467.07h3.6" stroke="#57480f" stroke-width=".5"/><path d="M793.2 463.07h3.6" stroke="#57480f" stroke-width=".5"/><path d="M793.2 455.05h3.6" stroke="#57480f" stroke-width=".5"/><path d="M793.2 451.05h3.6" stroke="#57480f" stroke-width=".5"/><path d="M793.2 447.04h3.6" stroke="#57480f" stroke-width=".5"/><path d="M793.2 439.02h3.6" stroke="#57480f" stroke-width=".5"/><path d="M793.2 435.02h3.6" stroke="#57480f" stroke-width=".5"/><path d="M793.2 431.01h3.6" stroke="#57480f" stroke-width=".5"/><path d="M793.2 423.00h3.6" stroke="#57480f" stroke-width=".5"/><path d="M793.2 418.99h3.6" stroke="#57480f" stroke-width=".5"/><path d="M793.2 414.98h3.6" stroke="#57480f" stroke-width=".5"/><path d="M793.20 539.2v2.4" stroke="#6a5812" stroke-width=".5"/><path d="M799.51 539.2v1.6" stroke="#6a5812" stroke-width=".5"/><path d="M805.81 539.2v1.6" stroke="#6a5812" stroke-width=".5"/><path d="M812.12 539.2v1.6" stroke="#6a5812" stroke-width=".5"/><path d="M818.42 539.2v2.4" stroke="#6a5812" stroke-width=".5"/><path d="M824.73 539.2v1.6" stroke="#6a5812" stroke-width=".5"/><path d="M831.03 539.2v1.6" stroke="#6a5812" stroke-width=".5"/><path d="M837.34 539.2v1.6" stroke="#6a5812" stroke-width=".5"/><path d="M843.64 539.2v2.4" stroke="#6a5812" stroke-width=".5"/><path d="M849.95 539.2v1.6" stroke="#6a5812" stroke-width=".5"/><path d="M856.26 539.2v1.6" stroke="#6a5812" stroke-width=".5"/><path d="M862.56 539.2v1.6" stroke="#6a5812" stroke-width=".5"/><path d="M868.87 539.2v2.4" stroke="#6a5812" stroke-width=".5"/><path d="M875.17 539.2v1.6" stroke="#6a5812" stroke-width=".5"/><path d="M881.48 539.2v1.6" stroke="#6a5812" stroke-width=".5"/><path d="M887.78 539.2v1.6" stroke="#6a5812" stroke-width=".5"/><path d="M894.09 539.2v2.4" stroke="#6a5812" stroke-width=".5"/><path d="M900.39 539.2v1.6" stroke="#6a5812" stroke-width=".5"/><path d="M906.70 539.2v1.6" stroke="#6a5812" stroke-width=".5"/><path d="M913.01 539.2v1.6" stroke="#6a5812" stroke-width=".5"/><path d="M919.31 539.2v2.4" stroke="#6a5812" stroke-width=".5"/><path d="M925.62 539.2v1.6" stroke="#6a5812" stroke-width=".5"/><path d="M931.92 539.2v1.6" stroke="#6a5812" stroke-width=".5"/><path d="M938.23 539.2v1.6" stroke="#6a5812" stroke-width=".5"/><path d="M944.53 539.2v2.4" stroke="#6a5812" stroke-width=".5"/><path d="M950.84 539.2v1.6" stroke="#6a5812" stroke-width=".5"/><path d="M957.14 539.2v1.6" stroke="#6a5812" stroke-width=".5"/><path d="M963.45 539.2v1.6" stroke="#6a5812" stroke-width=".5"/><path d="M969.76 539.2v2.4" stroke="#6a5812" stroke-width=".5"/><path d="M976.06 539.2v1.6" stroke="#6a5812" stroke-width=".5"/><path d="M982.37 539.2v1.6" stroke="#6a5812" stroke-width=".5"/><path d="M988.67 539.2v1.6" stroke="#6a5812" stroke-width=".5"/><path d="M994.98 539.2v2.4" stroke="#6a5812" stroke-width=".5"/><path d="M1001.28 539.2v1.6" stroke="#6a5812" stroke-width=".5"/><path d="M1007.59 539.2v1.6" stroke="#6a5812" stroke-width=".5"/><path d="M1013.89 539.2v1.6" stroke="#6a5812" stroke-width=".5"/><path d="M1020.20 539.2v2.4" stroke="#6a5812" stroke-width=".5"/><path d="M793.2 539L821.8 411.1" stroke="#c6c6c8" stroke-width=".7" fill="none"/><path d="M821.8 411.5H868.9" stroke="#989278" stroke-width=".9" fill="none"/><path d="M868.9 539L943.9 466.4" stroke="#c6c6c8" stroke-width=".7" fill="none"/><path d="M944.5 539L1020.2 466.4" stroke="#c6c6c8" stroke-width=".7" fill="none"/></svg>
<div style="left:543px;top:552px;width:61px;height:24px;background:#000;"></div>
<div style="left:543px;top:575px;width:61px;height:1px;background:#d8483b;"></div>
<svg style="left:23.4px;top:559px;" width="10" height="10" viewBox="0 0 10 10"><circle cx="5" cy="2.5" r="2.15" fill="#ececee"/><circle cx="2.5" cy="6.9" r="2.15" fill="#ececee"/><circle cx="7.5" cy="6.9" r="2.15" fill="#ececee"/><circle cx="5" cy="5.4" r="1.6" fill="#ececee"/></svg>
<span style="left:37.6px;top:554.9px;font-size:7px;color:#cacacc;transform:scaleX(0.945);">DaVinci Resolve 18</span>
<span style="left:317px;top:560px;font-size:6.6px;color:#949498;transform:scaleX(0.772);">メディア</span>
<span style="left:382px;top:560px;font-size:6.6px;color:#949498;transform:scaleX(0.632);">カット</span>
<span style="left:439px;top:560px;font-size:6.6px;color:#949498;transform:scaleX(0.677);">エディット</span>
<span style="left:501px;top:560px;font-size:6.6px;color:#949498;transform:scaleX(1.086);">Fusion</span>
<span style="left:566px;top:560px;font-size:6.6px;color:#f0f0f0;transform:scaleX(0.758);">カラー</span>
<span style="left:622.5px;top:560px;font-size:6.6px;color:#949498;transform:scaleX(1.066);">Fairlight</span>
<span style="left:686px;top:560px;font-size:6.6px;color:#949498;transform:scaleX(0.796);">デリバー</span>
<svg style="left:322px;top:555.6px;" width="10" height="7.4" viewBox="0 0 10 7.4"><rect x="0.4" y="0.4" width="9" height="6.2" rx="0.6" stroke="#8c8c90" stroke-width="0.7" fill="none"/><path d="M2.4 5.4l1.6-2 1.2 1.2 1-1 1.4 1.8z" fill="#8c8c90"/><circle cx="3.4" cy="2.0" r=".6" fill="#8c8c90"/></svg>
<svg style="left:382.4px;top:555.6px;" width="12" height="7.4" viewBox="0 0 12 7.4"><path d="M3 .5h8l-1.4 5.4h-8z" stroke="#8c8c90" stroke-width="0.7" fill="none" stroke-linecap="round" stroke-linejoin="round" /><path d="M.4 2.2l1.4 1-1.4 1" stroke="#8c8c90" stroke-width="0.6" fill="none" stroke-linecap="round" stroke-linejoin="round" /><rect x="5" y="2" width="3" height="2.2" fill="#8c8c90"/></svg>
<svg style="left:444.6px;top:555px;" width="12" height="9" viewBox="0 0 12 9"><path d="M5.8 .3v8" stroke="#8c8c90" stroke-width="0.7" fill="none" stroke-linecap="round" stroke-linejoin="round" /><rect x="2.6" y="1" width="6" height="1.5" fill="#8c8c90"/><rect x=".3" y="3.6" width="11" height="1.5" fill="#8c8c90"/><rect x="1.6" y="6.2" width="7" height="1.5" fill="#8c8c90"/></svg>
<svg style="left:507.6px;top:555px;" width="10" height="8.4" viewBox="0 0 10 8.4"><path d="M1 7.8l4.4-4.4" stroke="#8c8c90" stroke-width="1.2" fill="none" stroke-linecap="round" stroke-linejoin="round" /><path d="M5.8 3l1.2-1.2" stroke="#9a9a9e" stroke-width="1.2" fill="none" stroke-linecap="round" stroke-linejoin="round" /><circle cx="8.6" cy="1" r=".55" fill="#8c8c90"/><circle cx="8.8" cy="4.4" r=".55" fill="#8c8c90"/><circle cx="4.4" cy="0.8" r=".55" fill="#8c8c90"/><circle cx="6.8" cy="5.6" r=".55" fill="#8c8c90"/><circle cx="2.2" cy="2.2" r=".55" fill="#8c8c90"/></svg>
<svg style="left:568.8px;top:554.6px;" width="10" height="10" viewBox="0 0 10 10"><circle cx="4.60" cy="1.10" r=".85" fill="#f0489a"/><circle cx="7.07" cy="2.13" r=".85" fill="#b060f0"/><circle cx="8.10" cy="4.60" r=".85" fill="#5080f0"/><circle cx="7.07" cy="7.07" r=".85" fill="#40c0e8"/><circle cx="4.60" cy="8.10" r=".85" fill="#40d890"/><circle cx="2.13" cy="7.07" r=".85" fill="#a0e040"/><circle cx="1.10" cy="4.60" r=".85" fill="#f0d040"/><circle cx="2.13" cy="2.13" r=".85" fill="#f08a30"/><circle cx="4.6" cy="4.6" r=".7" fill="#c8c8ca"/></svg>
<svg style="left:631px;top:555.2px;" width="8" height="8" viewBox="0 0 8 8"><ellipse cx="2" cy="6.3" rx="1.5" ry="1.1" fill="#8c8c90"/><ellipse cx="6" cy="5.3" rx="1.5" ry="1.1" fill="#8c8c90"/><path d="M3.2 6.2v-4.8l4-1v4.8" stroke="#8c8c90" stroke-width="0.7" fill="none" stroke-linecap="round" stroke-linejoin="round" /><path d="M3.2 2.2l4-1" stroke="#8c8c90" stroke-width="1.1" fill="none" stroke-linecap="round" stroke-linejoin="round" /></svg>
<svg style="left:691.4px;top:554.8px;" width="10" height="9" viewBox="0 0 10 9"><path d="M9.4 .4c-3 0-5 1.6-6.4 4.2l2 2c2.6-1.4 4.4-3.2 4.4-6.2z" fill="none" stroke="#8c8c90" stroke-width=".7"/><circle cx="6.6" cy="3.2" r=".8" fill="#8c8c90"/><path d="M2.6 5.2l-1.8.4 1.2-2.2 1.8-.2M4.6 7.2l-.4 1.8 2.2-1.2.2-1.8" stroke="#8c8c90" stroke-width="0.6" fill="none" stroke-linecap="round" stroke-linejoin="round" /></svg>
<svg style="left:977.2px;top:560.2px;" width="8.4" height="8" viewBox="0 0 8.4 8"><path d="M4.2 .4l4 3.6h-1v3.6h-2v-2.4h-2v2.4h-2v-3.6h-1z" fill="#8e8e90"/></svg>
<svg style="left:1002.2px;top:559.4px;" width="9" height="9" viewBox="0 0 9 9"><rect x="3.7" y=".3" width="1.6" height="2" rx=".3" fill="#909092" transform="rotate(0 4.5 4.5)"/><rect x="3.7" y=".3" width="1.6" height="2" rx=".3" fill="#909092" transform="rotate(45 4.5 4.5)"/><rect x="3.7" y=".3" width="1.6" height="2" rx=".3" fill="#909092" transform="rotate(90 4.5 4.5)"/><rect x="3.7" y=".3" width="1.6" height="2" rx=".3" fill="#909092" transform="rotate(135 4.5 4.5)"/><rect x="3.7" y=".3" width="1.6" height="2" rx=".3" fill="#909092" transform="rotate(180 4.5 4.5)"/><rect x="3.7" y=".3" width="1.6" height="2" rx=".3" fill="#909092" transform="rotate(225 4.5 4.5)"/><rect x="3.7" y=".3" width="1.6" height="2" rx=".3" fill="#909092" transform="rotate(270 4.5 4.5)"/><rect x="3.7" y=".3" width="1.6" height="2" rx=".3" fill="#909092" transform="rotate(315 4.5 4.5)"/><circle cx="4.5" cy="4.5" r="2.3" fill="none" stroke="#909092" stroke-width="1.3"/></svg>
</div></body></html>
